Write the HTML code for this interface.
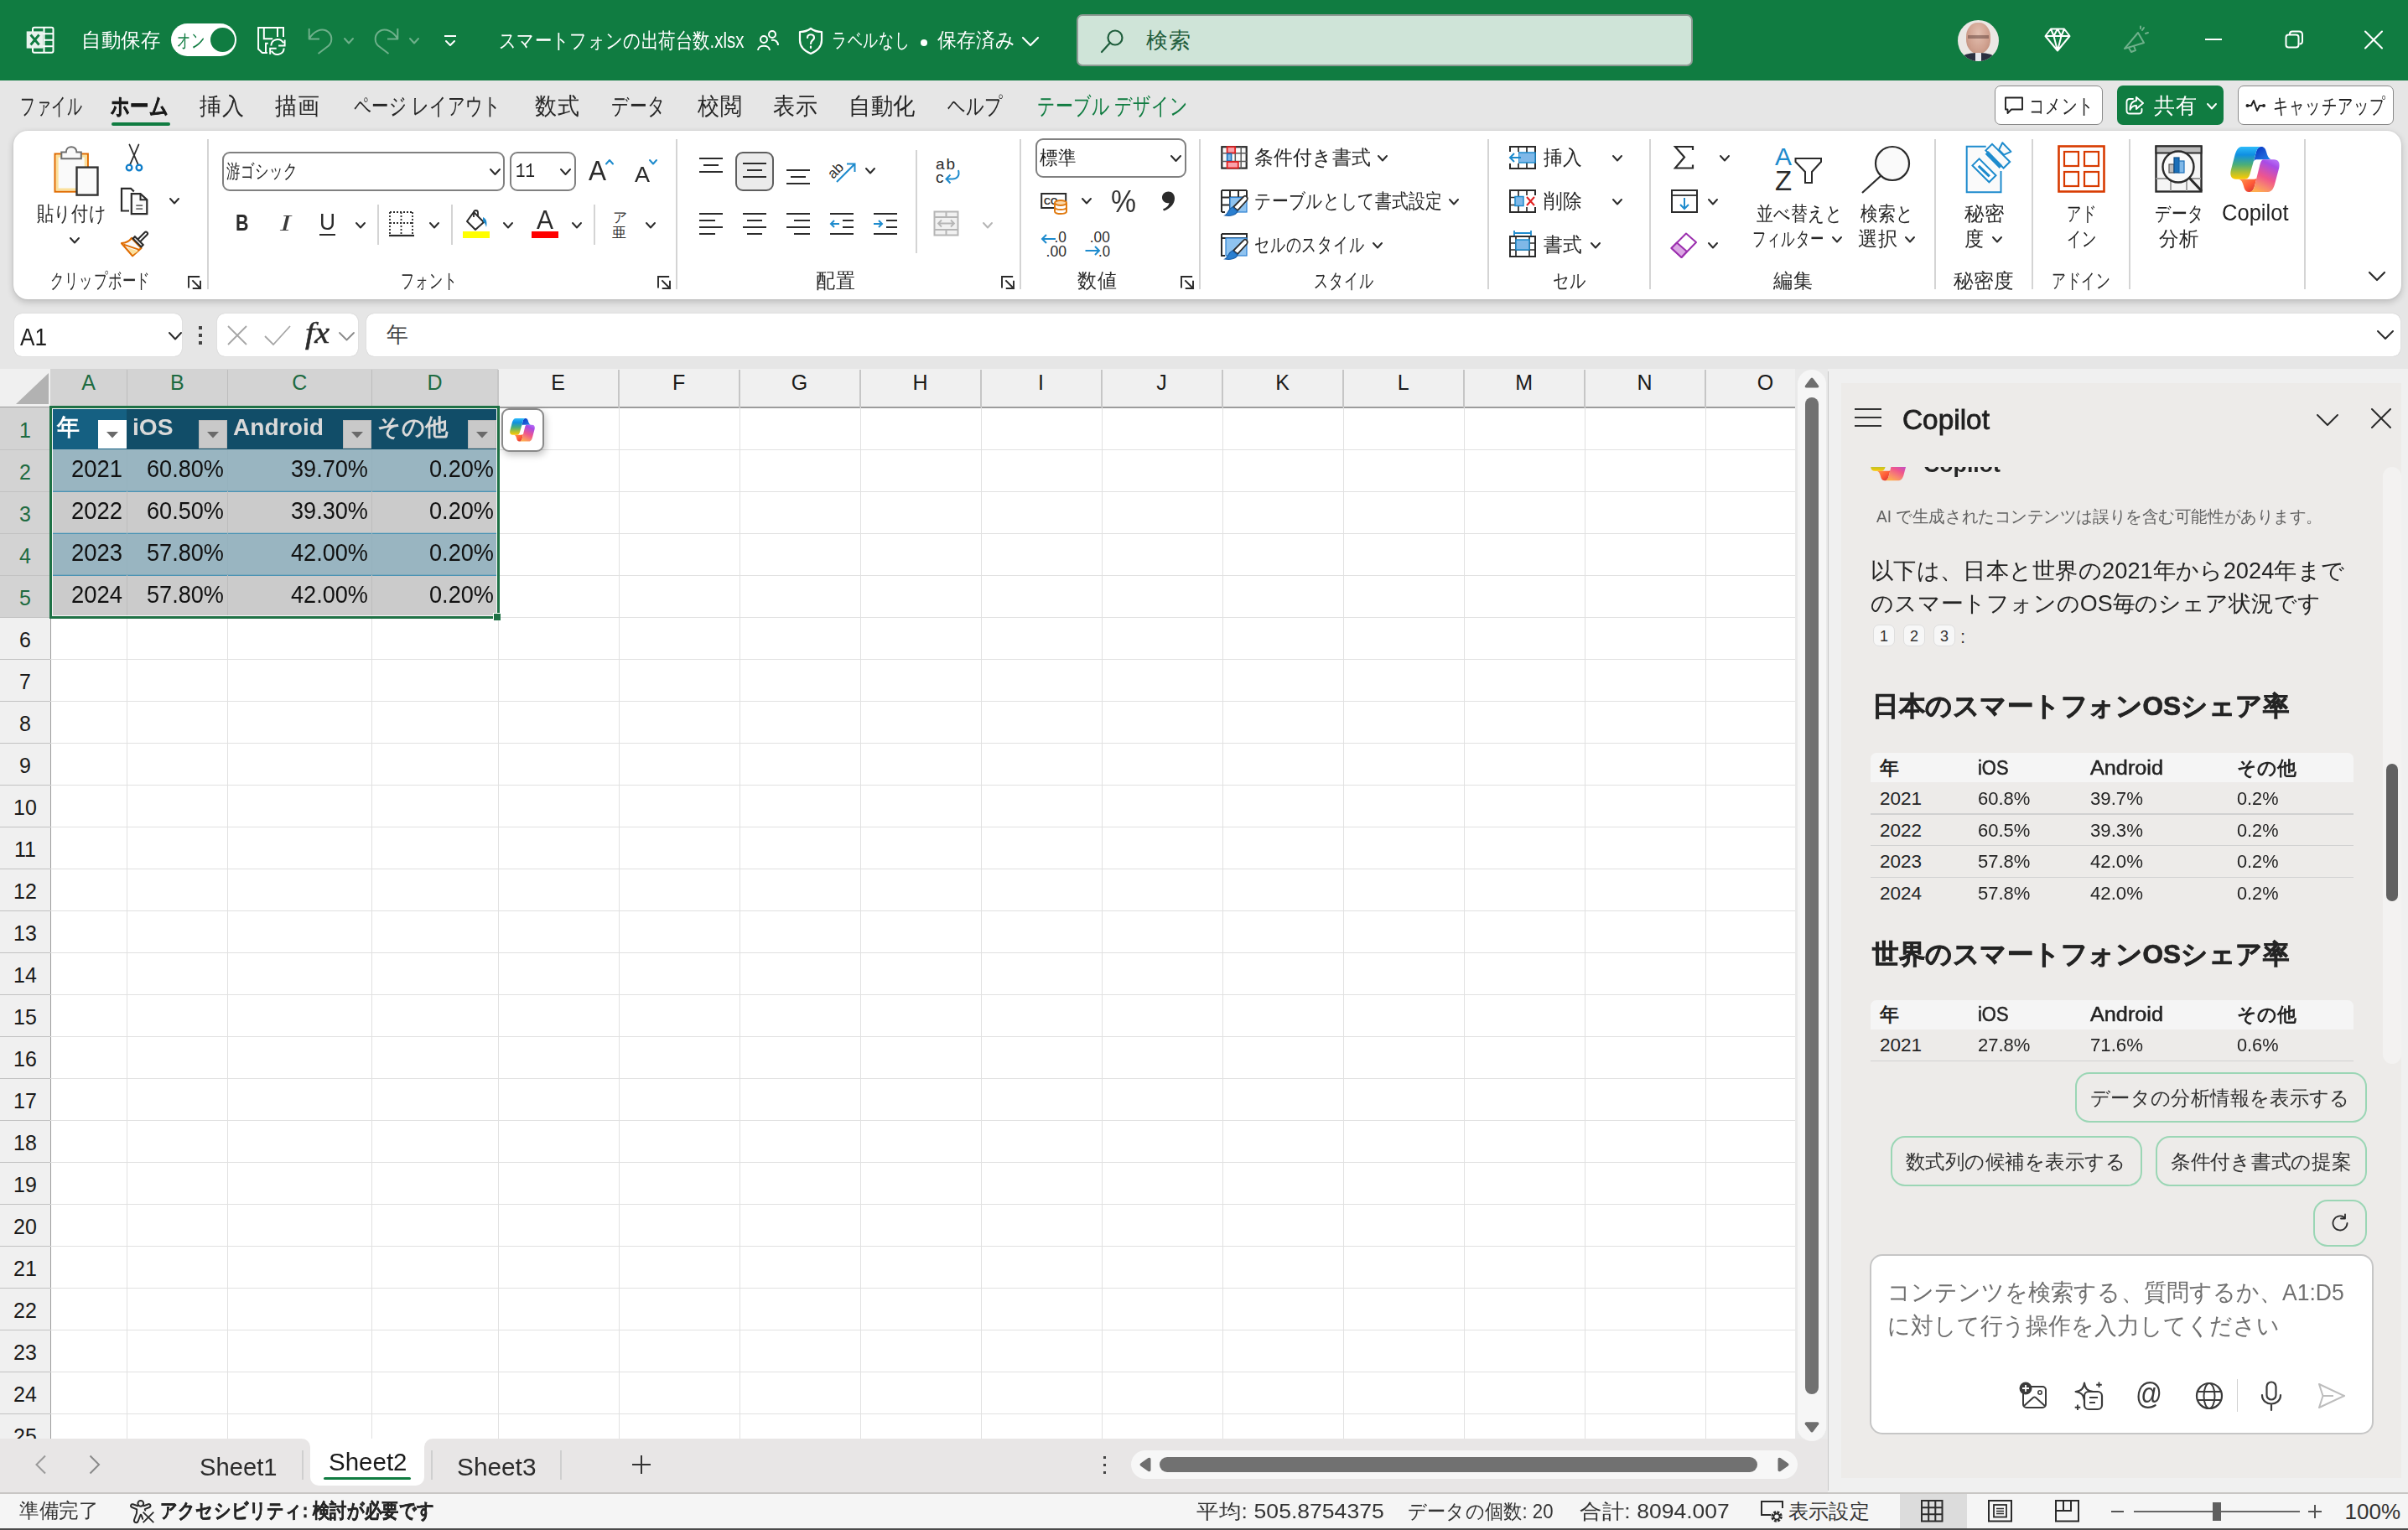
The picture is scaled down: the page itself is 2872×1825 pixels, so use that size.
<!DOCTYPE html>
<html lang="ja"><head><meta charset="utf-8"><title>Excel</title><style>
html,body{margin:0;padding:0}
body{width:2872px;height:1825px;overflow:hidden;position:relative;background:#e6e6e6;font-family:"Liberation Sans",sans-serif;}
div,svg,span.t{position:absolute;box-sizing:border-box}
span.t{white-space:nowrap;transform-origin:0 50%;display:block}
svg{overflow:visible}
</style></head>
<body>
<div style="left:0px;top:0px;width:2872px;height:96px;background:#107c41;"></div>
<svg style="left:31px;top:31px;" width="34" height="34" viewBox="0 0 34 34">
<rect x="8" y="1.8" width="24.5" height="30" rx="2" fill="none" stroke="#fff" stroke-width="2"/>
<path d="M21.5 2 V31.5 M21.5 9.3 H32 M21.5 16.8 H32 M21.5 24.3 H32 M8 9.3 H21.5 M8 24.3 H21.5" stroke="#fff" stroke-width="2" fill="none"/>
<rect x="0.7" y="6.4" width="19.8" height="20.2" fill="#e9f3ed"/>
<path d="M5.6 10.5 L15.6 22.5 M15.6 10.5 L5.6 22.5" stroke="#107c41" stroke-width="2.8" fill="none"/></svg>
<span class="t" style="left:97px;top:36.0px;font-size:24px;line-height:24px;color:#fff;width:96.6px;text-align-last:justify;transform:scaleX(0.979);">自動保存</span>
<div style="left:204px;top:28px;width:78px;height:39px;background:#fff;border-radius:20px;"></div>
<div style="left:251px;top:33px;width:29px;height:29px;background:#107c41;border-radius:50%;"></div>
<span class="t" style="left:210.5px;top:36.5px;font-size:23px;line-height:23px;color:#107c41;width:48.6px;text-align-last:justify;transform:scaleX(0.708);">オン</span>
<svg style="left:296px;top:24px;" width="60" height="48" viewBox="0 0 60 48"><path d="M42 19.9 V9.1 H12.1 V34.5 L16.9 39.1 H22.9 M18.8 9.1 V22.3 H29.2 M35 9.1 V19.9 M21 39.1 V27.8 H23.8" fill="none" stroke="#fff" stroke-width="2"/>
<path d="M27.3 30.5 A7.8 7.8 0 0 1 42 27.3 M43.6 23.4 V30.6 H36.1" fill="none" stroke="#fff" stroke-width="2"/>
<path d="M42.7 33.5 A7.8 7.8 0 0 1 28 36.7 M26.2 40.8 V33.7 H33.7" fill="none" stroke="#fff" stroke-width="2"/></svg>
<svg style="left:366px;top:31px;" width="32" height="35" viewBox="0 0 32 35"><path d="M2.7 3 V15.4 H15 M2.7 15.4 C8 6 17 2.5 23 5.5 C30 9 31.5 18 26 23.5 L13.5 33" fill="none" stroke="#6fb08b" stroke-width="2" stroke-linejoin="round"/></svg>
<svg style="left:409.0px;top:43.75px;" width="14" height="9.5" viewBox="0 0 14 9.5"><polyline points="2,2 7.0,7.5 12,2" fill="none" stroke="#6fb08b" stroke-width="2" stroke-linecap="round" stroke-linejoin="round"/></svg>
<svg style="left:445px;top:31px;" width="32" height="35" viewBox="0 0 32 35"><path d="M29.3 3 V15.4 H17 M29.3 15.4 C24 6 15 2.5 9 5.5 C2 9 0.5 18 6 23.5 L18.5 33" fill="none" stroke="#6fb08b" stroke-width="2" stroke-linejoin="round"/></svg>
<svg style="left:487.0px;top:43.75px;" width="14" height="9.5" viewBox="0 0 14 9.5"><polyline points="2,2 7.0,7.5 12,2" fill="none" stroke="#6fb08b" stroke-width="2" stroke-linecap="round" stroke-linejoin="round"/></svg>
<svg style="left:528px;top:41px;" width="18" height="4" viewBox="0 0 18 4"><line x1="2" y1="2" x2="16" y2="2" stroke="#fff" stroke-width="2" stroke-linecap="butt"/></svg>
<svg style="left:530.0px;top:46.5px;" width="14" height="9" viewBox="0 0 14 9"><polyline points="2,2 7.0,7 12,2" fill="none" stroke="#fff" stroke-width="2" stroke-linecap="round" stroke-linejoin="round"/></svg>
<span class="t" style="left:595px;top:35.5px;font-size:25px;line-height:25px;color:#fff;width:357.6px;text-align-last:justify;transform:scaleX(0.818);">スマートフォンの出荷台数.xlsx</span>
<svg style="left:903px;top:35px;" width="26" height="26" viewBox="0 0 26 26"><circle cx="8" cy="12" r="4" fill="none" stroke="#fff" stroke-width="2"/><path d="M1 25 C1 18 15 18 15 25" fill="none" stroke="#fff" stroke-width="2"/><circle cx="18" cy="6" r="4" fill="none" stroke="#fff" stroke-width="2"/><path d="M17 13 C22 12 25 15 25 19" fill="none" stroke="#fff" stroke-width="2"/></svg>
<svg style="left:952px;top:32px;" width="30" height="34" viewBox="0 0 30 34"><path d="M15 2 C11 5 7 6 2 6 V16 C2 24 8 29 15 32 C22 29 28 24 28 16 V6 C23 6 19 5 15 2 Z" fill="none" stroke="#fff" stroke-width="2.2" stroke-linejoin="round"/><path d="M11 13 C11 8 19 8 19 13 C19 16 15 16 15 20 M15 23.5 V25" fill="none" stroke="#fff" stroke-width="2.2" stroke-linecap="round"/></svg>
<span class="t" style="left:992px;top:36.0px;font-size:24px;line-height:24px;color:#fff;width:125.6px;text-align-last:justify;transform:scaleX(0.744);">ラベルなし</span>
<div style="left:1097.5px;top:46.5px;width:8px;height:8px;background:#fff;border-radius:50%;"></div>
<span class="t" style="left:1117.5px;top:36.0px;font-size:24px;line-height:24px;color:#fff;width:97.6px;text-align-last:justify;transform:scaleX(0.948);">保存済み</span>
<svg style="left:1218.0px;top:42.5px;" width="22" height="13" viewBox="0 0 22 13"><polyline points="2,2 11.0,11 20,2" fill="none" stroke="#fff" stroke-width="2.2" stroke-linecap="round" stroke-linejoin="round"/></svg>
<div style="left:1284px;top:17px;width:735px;height:62px;background:#cfe4d8;border:2px solid #8f9a94;border-radius:7px;"></div>
<svg style="left:1312px;top:34px;" width="30" height="30" viewBox="0 0 30 30"><circle cx="18" cy="11" r="8.5" fill="none" stroke="#1f5d3c" stroke-width="2.2"/><line x1="12" y1="17" x2="2" y2="28" stroke="#1f5d3c" stroke-width="2.2" stroke-linecap="round"/></svg>
<span class="t" style="left:1367px;top:35.0px;font-size:26px;line-height:26px;color:#1f5d3c;width:52.6px;text-align-last:justify;">検索</span>
<div style="left:2335px;top:24px;width:49px;height:49px;background:#ebe7e4;border-radius:50%;overflow:hidden;"><div style="left:10px;top:3px;width:29px;height:37px;border-radius:46%;background:radial-gradient(ellipse at 50% 35%,#e3bfb0 0%,#cfa08e 60%,#b98673 100%);filter:blur(.6px)"></div><div style="left:12px;top:17.5px;width:25px;height:4px;background:#6b4a42;opacity:.55;filter:blur(.5px)"></div><div style="left:5px;top:39px;width:39px;height:14px;background:#2b3040;border-radius:45% 45% 0 0;filter:blur(.5px)"></div><div style="left:21px;top:39px;width:7px;height:10px;background:#e8e8ee;filter:blur(.5px)"></div></div>
<svg style="left:2438px;top:33px;" width="32" height="29" viewBox="0 0 32 29"><path d="M8 1.5 H24 L30.5 10 L16 27.5 L1.5 10 Z M1.5 10 H30.5 M8 1.5 L11.5 10 L16 27.5 L20.5 10 L24 1.5 M11.5 10 L16 1.5 L20.5 10" fill="none" stroke="#fff" stroke-width="2" stroke-linejoin="round"/></svg>
<svg style="left:2530px;top:31px;" width="34" height="34" viewBox="0 0 34 34"><path d="M4 27 L20 8 L27 20 Z M9 26 L12 31 L17 29 L15 24 M25 5 L27 2 M29 9 L32 8 M23 3 L23 0.5" fill="none" stroke="#6fb08b" stroke-width="2" stroke-linejoin="round" stroke-linecap="round"/></svg>
<svg style="left:2628px;top:45px;" width="24" height="4" viewBox="0 0 24 4"><line x1="2" y1="2" x2="22" y2="2" stroke="#fff" stroke-width="2" stroke-linecap="butt"/></svg>
<svg style="left:2725px;top:36px;" width="24" height="24" viewBox="0 0 24 24"><rect x="1.5" y="5.5" width="15" height="15" rx="3" fill="none" stroke="#fff" stroke-width="2"/><path d="M6 5 V4.5 Q6 1.5 9 1.5 H17 Q21 1.5 21 5.5 V13 Q21 16.5 17.5 16.5" fill="none" stroke="#fff" stroke-width="2"/></svg>
<svg style="left:2820px;top:36px;" width="24" height="24" viewBox="0 0 24 24"><path d="M1 1.5 L21 21.5 M21 1.5 L1 21.5" stroke="#fff" stroke-width="2.1" stroke-linecap="round"/></svg>
<span class="t" style="left:24px;top:113.0px;font-size:28px;line-height:28px;color:#262626;width:116.6px;text-align-last:justify;transform:scaleX(0.638);">ファイル</span>
<span class="t" style="left:238px;top:113.0px;font-size:28px;line-height:28px;color:#262626;width:56.6px;text-align-last:justify;transform:scaleX(0.929);">挿入</span>
<span class="t" style="left:328px;top:113.0px;font-size:28px;line-height:28px;color:#262626;width:56.6px;text-align-last:justify;transform:scaleX(0.929);">描画</span>
<span class="t" style="left:422px;top:113.0px;font-size:28px;line-height:28px;color:#262626;width:239.4px;text-align-last:justify;transform:scaleX(0.733);">ページ レイアウト</span>
<span class="t" style="left:638px;top:113.0px;font-size:28px;line-height:28px;color:#262626;width:56.6px;text-align-last:justify;transform:scaleX(0.929);">数式</span>
<span class="t" style="left:729px;top:113.0px;font-size:28px;line-height:28px;color:#262626;width:86.6px;text-align-last:justify;transform:scaleX(0.744);">データ</span>
<span class="t" style="left:832px;top:113.0px;font-size:28px;line-height:28px;color:#262626;width:56.6px;text-align-last:justify;transform:scaleX(0.929);">校閲</span>
<span class="t" style="left:922px;top:113.0px;font-size:28px;line-height:28px;color:#262626;width:56.6px;text-align-last:justify;transform:scaleX(0.929);">表示</span>
<span class="t" style="left:1012px;top:113.0px;font-size:28px;line-height:28px;color:#262626;width:84.6px;text-align-last:justify;transform:scaleX(0.940);">自動化</span>
<span class="t" style="left:1130px;top:113.0px;font-size:28px;line-height:28px;color:#262626;width:87.6px;text-align-last:justify;transform:scaleX(0.759);">ヘルプ</span>
<span class="t" style="left:132px;top:113.0px;font-size:28px;line-height:28px;color:#1a1a1a;font-weight:bold;width:86.6px;text-align-last:justify;transform:scaleX(0.802);-webkit-text-stroke:.5px #1a1a1a;">ホーム</span>
<div style="left:133px;top:145.5px;width:70px;height:4px;background:#107c41;border-radius:2px;"></div>
<span class="t" style="left:1237px;top:113.0px;font-size:28px;line-height:28px;color:#107c41;width:239.4px;text-align-last:justify;transform:scaleX(0.750);">テーブル デザイン</span>
<div style="left:2379px;top:102px;width:129px;height:47px;background:#fff;border:1.5px solid #8a8a8a;border-radius:7px;"></div>
<svg style="left:2390px;top:114px;" width="24" height="24" viewBox="0 0 24 24"><path d="M2 2.5 H22 V16.5 H9 L4.5 21 V16.5 H2 Z" fill="none" stroke="#222" stroke-width="1.9" stroke-linejoin="round"/></svg>
<span class="t" style="left:2420px;top:113.5px;font-size:25px;line-height:25px;color:#222;width:104.6px;text-align-last:justify;transform:scaleX(0.740);">コメント</span>
<div style="left:2525px;top:102px;width:127px;height:47px;background:#107c41;border-radius:7px;"></div>
<svg style="left:2534px;top:113px;" width="26" height="26" viewBox="0 0 26 26"><path d="M10 5 H6 Q2.5 5 2.5 8.5 V19 Q2.5 22.5 6 22.5 H17 Q20.5 22.5 20.5 19 V17 M14 3 L22 10 L14 17 V13 C10 13 8 14.5 6.5 18 C6.5 12 9 7.5 14 7 Z" fill="none" stroke="#fff" stroke-width="1.9" stroke-linejoin="round" stroke-linecap="round"/></svg>
<span class="t" style="left:2569px;top:113.0px;font-size:26px;line-height:26px;color:#fff;width:52.6px;text-align-last:justify;transform:scaleX(0.962);">共有</span>
<svg style="left:2631.0px;top:122.25px;" width="14" height="9.5" viewBox="0 0 14 9.5"><polyline points="2,2 7.0,7.5 12,2" fill="none" stroke="#fff" stroke-width="2" stroke-linecap="round" stroke-linejoin="round"/></svg>
<div style="left:2669px;top:102px;width:186px;height:47px;background:#fff;border:1.5px solid #8a8a8a;border-radius:7px;"></div>
<svg style="left:2678px;top:116px;" width="26" height="20" viewBox="0 0 26 20"><path d="M3 10 H7 L10 4 L14 16 L17 10 H20" fill="none" stroke="#222" stroke-width="2" stroke-linejoin="round" stroke-linecap="round"/><circle cx="2.5" cy="10" r="2" fill="#222"/><circle cx="22" cy="10" r="2" fill="#222"/></svg>
<span class="t" style="left:2711px;top:113.5px;font-size:25px;line-height:25px;color:#222;width:182.6px;text-align-last:justify;transform:scaleX(0.736);">キャッチアップ</span>
<div style="left:16px;top:155.5px;width:2848px;height:201.5px;background:#fff;border-radius:17px;box-shadow:0 3px 8px rgba(0,0,0,.2),0 0 2px rgba(0,0,0,.1);"></div>
<div style="left:246.5px;top:166px;width:2px;height:179px;background:#d4d4d4;"></div>
<div style="left:806px;top:166px;width:2px;height:179px;background:#d4d4d4;"></div>
<div style="left:1216px;top:166px;width:2px;height:179px;background:#d4d4d4;"></div>
<div style="left:1430px;top:166px;width:2px;height:179px;background:#d4d4d4;"></div>
<div style="left:1774px;top:166px;width:2px;height:179px;background:#d4d4d4;"></div>
<div style="left:1967px;top:166px;width:2px;height:179px;background:#d4d4d4;"></div>
<div style="left:2307px;top:166px;width:2px;height:179px;background:#d4d4d4;"></div>
<div style="left:2423px;top:166px;width:2px;height:179px;background:#d4d4d4;"></div>
<div style="left:2538.5px;top:166px;width:2px;height:179px;background:#d4d4d4;"></div>
<div style="left:2747.5px;top:166px;width:2px;height:179px;background:#d4d4d4;"></div>
<span class="t" style="left:60px;top:324.2px;font-size:23.5px;line-height:23.5px;color:#2b2b2b;width:174.6px;text-align-last:justify;transform:scaleX(0.684);">クリップボード</span>
<span class="t" style="left:478px;top:324.2px;font-size:23.5px;line-height:23.5px;color:#2b2b2b;width:100.6px;text-align-last:justify;transform:scaleX(0.670);">フォント</span>
<span class="t" style="left:973px;top:324.2px;font-size:23.5px;line-height:23.5px;color:#2b2b2b;width:48.6px;text-align-last:justify;transform:scaleX(0.958);">配置</span>
<span class="t" style="left:1285px;top:324.2px;font-size:23.5px;line-height:23.5px;color:#2b2b2b;width:48.6px;text-align-last:justify;transform:scaleX(0.958);">数値</span>
<span class="t" style="left:1567px;top:324.2px;font-size:23.5px;line-height:23.5px;color:#2b2b2b;width:100.6px;text-align-last:justify;transform:scaleX(0.710);">スタイル</span>
<span class="t" style="left:1852px;top:324.2px;font-size:23.5px;line-height:23.5px;color:#2b2b2b;width:50.6px;text-align-last:justify;transform:scaleX(0.800);">セル</span>
<span class="t" style="left:2115px;top:324.2px;font-size:23.5px;line-height:23.5px;color:#2b2b2b;width:48.6px;text-align-last:justify;transform:scaleX(0.958);">編集</span>
<span class="t" style="left:2330px;top:324.2px;font-size:23.5px;line-height:23.5px;color:#2b2b2b;width:72.6px;text-align-last:justify;transform:scaleX(0.986);">秘密度</span>
<span class="t" style="left:2447px;top:324.2px;font-size:23.5px;line-height:23.5px;color:#2b2b2b;width:100.6px;text-align-last:justify;transform:scaleX(0.700);">アドイン</span>
<svg style="left:224px;top:329px;" width="17" height="17" viewBox="0 0 17 17"><path d="M1 13.5 V1 H13.2 M6 6 L15 15 M15 6.7 V15 H6.7" fill="none" stroke="#2b2b2b" stroke-width="1.9" stroke-linecap="square"/></svg>
<svg style="left:784px;top:329px;" width="17" height="17" viewBox="0 0 17 17"><path d="M1 13.5 V1 H13.2 M6 6 L15 15 M15 6.7 V15 H6.7" fill="none" stroke="#2b2b2b" stroke-width="1.9" stroke-linecap="square"/></svg>
<svg style="left:1194px;top:329px;" width="17" height="17" viewBox="0 0 17 17"><path d="M1 13.5 V1 H13.2 M6 6 L15 15 M15 6.7 V15 H6.7" fill="none" stroke="#2b2b2b" stroke-width="1.9" stroke-linecap="square"/></svg>
<svg style="left:1408px;top:329px;" width="17" height="17" viewBox="0 0 17 17"><path d="M1 13.5 V1 H13.2 M6 6 L15 15 M15 6.7 V15 H6.7" fill="none" stroke="#2b2b2b" stroke-width="1.9" stroke-linecap="square"/></svg>
<svg style="left:2824.0px;top:323.0px;" width="22" height="13" viewBox="0 0 22 13"><polyline points="2,2 11.0,11 20,2" fill="none" stroke="#2b2b2b" stroke-width="2.2" stroke-linecap="round" stroke-linejoin="round"/></svg>
<svg style="left:64px;top:173px;" width="56" height="62" viewBox="0 0 56 62"><rect x="1.6" y="10.6" width="39.2" height="45" fill="#fafafa" stroke="#e06c00" stroke-width="2.2"/>
<rect x="4.2" y="13.2" width="34" height="39.8" fill="none" stroke="#fbe09c" stroke-width="3"/>
<path d="M9.3 16.3 V8.4 H14.8 C14.8 0.2 27.4 0.2 27.4 8.4 H32.8 V16.3 Z" fill="#fafafa" stroke="#6e6e6e" stroke-width="2"/>
<rect x="27.5" y="26.6" width="25" height="33" fill="#fafafa" stroke="#333" stroke-width="2.4"/></svg>
<span class="t" style="left:44px;top:242.5px;font-size:24px;line-height:24px;color:#262626;width:98.6px;text-align-last:justify;transform:scaleX(0.837);">貼り付け</span>
<svg style="left:82.0px;top:281.75px;" width="14" height="9.5" viewBox="0 0 14 9.5"><polyline points="2,2 7.0,7.5 12,2" fill="none" stroke="#2b2b2b" stroke-width="2" stroke-linecap="round" stroke-linejoin="round"/></svg>
<svg style="left:148px;top:171px;" width="24" height="34" viewBox="0 0 24 34"><path d="M6.4 1.5 L16.9 25.6 M17.4 1.5 L7 25.6" stroke="#2b2b2b" stroke-width="1.8" fill="none" stroke-linecap="round"/><circle cx="6.1" cy="29" r="3.3" fill="none" stroke="#0f7dc9" stroke-width="2.3"/><circle cx="17.9" cy="29" r="3.3" fill="none" stroke="#0f7dc9" stroke-width="2.3"/></svg>
<svg style="left:143px;top:223px;" width="35" height="34" viewBox="0 0 35 34"><path d="M11 28.5 H2 V1.8 H13 L16.8 5.4" fill="none" stroke="#2b2b2b" stroke-width="2.2"/><path d="M13.8 8.1 H24.5 L32.3 15.2 V32.1 H13.8 Z" fill="#fafafa" stroke="#2b2b2b" stroke-width="2.2" stroke-linejoin="miter"/><path d="M24.5 8.1 V15.2 H32.3" fill="none" stroke="#2b2b2b" stroke-width="2"/><path d="M19.3 22.2 H27.1 M19.3 26.1 H27.1" stroke="#6a6a6a" stroke-width="1.8"/></svg>
<svg style="left:201.0px;top:235.25px;" width="14" height="9.5" viewBox="0 0 14 9.5"><polyline points="2,2 7.0,7.5 12,2" fill="none" stroke="#2b2b2b" stroke-width="2" stroke-linecap="round" stroke-linejoin="round"/></svg>
<svg style="left:143px;top:275px;" width="36" height="34" viewBox="0 0 36 34"><path d="M2 15.2 C7 14.8 11.5 12.5 14 8.9 L25.5 20.9 L15.1 30.3 Z" fill="#fafafa" stroke="#e06c00" stroke-width="2.2" stroke-linejoin="round"/><path d="M9.3 20.4 L22 24.4 L15.1 29 Z" fill="#fbe09c"/><path d="M4.5 16.6 L23 22.9" stroke="#e06c00" stroke-width="2" fill="none"/><line x1="31" y1="3.6" x2="23.5" y2="11.1" stroke="#2b2b2b" stroke-width="6" stroke-linecap="round"/><line x1="31" y1="3.6" x2="23" y2="11.6" stroke="#fff" stroke-width="2" stroke-linecap="round"/><line x1="16" y1="7.7" x2="27.3" y2="19" stroke="#2b2b2b" stroke-width="5.4"/><line x1="17.5" y1="9.2" x2="25.8" y2="17.5" stroke="#f4f4f4" stroke-width="1.3"/></svg>
<div style="left:264.5px;top:180.5px;width:337.5px;height:47px;background:#fff;border:2px solid #808080;border-radius:9px;"></div>
<span class="t" style="left:270px;top:192.5px;font-size:23px;line-height:23px;color:#1f1f1f;width:119.6px;text-align-last:justify;transform:scaleX(0.714);">游ゴシック</span>
<svg style="left:582.5px;top:200.0px;" width="15" height="10" viewBox="0 0 15 10"><polyline points="2,2 7.5,8 13,2" fill="none" stroke="#2b2b2b" stroke-width="2" stroke-linecap="round" stroke-linejoin="round"/></svg>
<div style="left:607.5px;top:180.5px;width:79.5px;height:47px;background:#fff;border:2px solid #808080;border-radius:9px;"></div>
<span class="t" style="left:615px;top:193.0px;font-size:24px;line-height:24px;color:#1f1f1f;width:29.4px;text-align-last:justify;transform:scaleX(0.798);font-family:'Liberation Mono',monospace;">11</span>
<svg style="left:666.5px;top:200.0px;" width="15" height="10" viewBox="0 0 15 10"><polyline points="2,2 7.5,8 13,2" fill="none" stroke="#2b2b2b" stroke-width="2" stroke-linecap="round" stroke-linejoin="round"/></svg>
<span class="t" style="left:702px;top:186.0px;font-size:34px;line-height:34px;color:#2b2b2b;width:23.3px;text-align-last:justify;transform:scaleX(0.926);">A</span>
<svg style="left:721.0px;top:188.75px;" width="12" height="8.5" viewBox="0 0 12 8.5"><polyline points="2,6.5 6.0,2 10,6.5" fill="none" stroke="#1e8bcd" stroke-width="2" stroke-linecap="round" stroke-linejoin="round"/></svg>
<span class="t" style="left:757px;top:195.0px;font-size:26px;line-height:26px;color:#2b2b2b;width:17.9px;text-align-last:justify;transform:scaleX(1.038);">A</span>
<svg style="left:773.0px;top:189.25px;" width="12" height="8.5" viewBox="0 0 12 8.5"><polyline points="2,2 6.0,6.5 10,2" fill="none" stroke="#1e8bcd" stroke-width="2" stroke-linecap="round" stroke-linejoin="round"/></svg>
<span class="t" style="left:281px;top:252.0px;font-size:28px;line-height:28px;color:#2b2b2b;font-weight:bold;width:20.8px;text-align-last:justify;transform:scaleX(0.766);">B</span>
<span class="t" style="left:334px;top:252.5px;font-size:27px;line-height:27px;color:#3a3a3a;width:9.6px;text-align-last:justify;transform:scaleX(1.444);font-family:'Liberation Serif',serif;font-style:italic;">I</span>
<span class="t" style="left:381px;top:251.5px;font-size:27px;line-height:27px;color:#2b2b2b;width:20.1px;text-align-last:justify;transform:scaleX(0.974);">U</span>
<div style="left:381px;top:279px;width:19px;height:2px;background:#2b2b2b;"></div>
<svg style="left:423.0px;top:264.25px;" width="14" height="9.5" viewBox="0 0 14 9.5"><polyline points="2,2 7.0,7.5 12,2" fill="none" stroke="#2b2b2b" stroke-width="2" stroke-linecap="round" stroke-linejoin="round"/></svg>
<div style="left:450px;top:244px;width:2px;height:48px;background:#d4d4d4;"></div>
<svg style="left:463px;top:251px;" width="32" height="32" viewBox="0 0 32 32"><path d="M2 2 H29 M2 2 V28 M29 2 V28 M15.5 2 V28 M2 15 H29" stroke="#2b2b2b" stroke-width="1.8" stroke-dasharray="2 2" fill="none"/><line x1="1" y1="30" x2="31" y2="30" stroke="#2b2b2b" stroke-width="2.2"/></svg>
<svg style="left:510.5px;top:264.25px;" width="14" height="9.5" viewBox="0 0 14 9.5"><polyline points="2,2 7.0,7.5 12,2" fill="none" stroke="#2b2b2b" stroke-width="2" stroke-linecap="round" stroke-linejoin="round"/></svg>
<div style="left:538px;top:244px;width:2px;height:48px;background:#d4d4d4;"></div>
<svg style="left:552px;top:250px;" width="34" height="26" viewBox="0 0 34 26"><path d="M13 3 L25 15 L15 24 L5 14 Z" fill="#fff" stroke="#2b2b2b" stroke-width="2" stroke-linejoin="round"/><path d="M13 9 V3.5 Q13 1 15.5 1 Q18 1 18 3.5 V8" fill="none" stroke="#2b2b2b" stroke-width="1.8"/><path d="M24 9 C29 11 29 17 28 21 C27 17 25 14.5 24 14 Z" fill="#1e8bcd"/></svg>
<div style="left:552px;top:276px;width:32px;height:7.5px;background:#ffff00;"></div>
<svg style="left:599.0px;top:264.25px;" width="14" height="9.5" viewBox="0 0 14 9.5"><polyline points="2,2 7.0,7.5 12,2" fill="none" stroke="#2b2b2b" stroke-width="2" stroke-linecap="round" stroke-linejoin="round"/></svg>
<span class="t" style="left:640px;top:246.5px;font-size:31px;line-height:31px;color:#2b2b2b;width:21.3px;text-align-last:justify;transform:scaleX(0.967);">A</span>
<div style="left:634px;top:276px;width:32px;height:7.5px;background:#ff0000;"></div>
<svg style="left:681.0px;top:264.25px;" width="14" height="9.5" viewBox="0 0 14 9.5"><polyline points="2,2 7.0,7.5 12,2" fill="none" stroke="#2b2b2b" stroke-width="2" stroke-linecap="round" stroke-linejoin="round"/></svg>
<div style="left:708px;top:244px;width:2px;height:48px;background:#d4d4d4;"></div>
<span class="t" style="left:730.5px;top:250.8px;font-size:16.5px;line-height:16.5px;color:#333;">ア</span>
<span class="t" style="left:730px;top:269.2px;font-size:16.5px;line-height:16.5px;color:#333;">亜</span>
<svg style="left:769.0px;top:264.25px;" width="14" height="9.5" viewBox="0 0 14 9.5"><polyline points="2,2 7.0,7.5 12,2" fill="none" stroke="#2b2b2b" stroke-width="2" stroke-linecap="round" stroke-linejoin="round"/></svg>
<svg style="left:834px;top:186px;" width="30" height="30" viewBox="0 0 30 30"><line x1="0" y1="3" x2="28" y2="3" stroke="#2b2b2b" stroke-width="2"/><line x1="5" y1="11" x2="23" y2="11" stroke="#2b2b2b" stroke-width="2"/><line x1="0" y1="19" x2="28" y2="19" stroke="#2b2b2b" stroke-width="2"/></svg>
<div style="left:876.5px;top:180.5px;width:46.5px;height:47px;background:#ebebeb;border:2px solid #5e5e5e;border-radius:9px;"></div>
<svg style="left:886px;top:189px;" width="30" height="30" viewBox="0 0 30 30"><line x1="0" y1="6" x2="28" y2="6" stroke="#2b2b2b" stroke-width="2"/><line x1="5" y1="14" x2="23" y2="14" stroke="#2b2b2b" stroke-width="2"/><line x1="0" y1="22" x2="28" y2="22" stroke="#2b2b2b" stroke-width="2"/></svg>
<svg style="left:938px;top:196px;" width="30" height="30" viewBox="0 0 30 30"><line x1="0" y1="7" x2="28" y2="7" stroke="#2b2b2b" stroke-width="2"/><line x1="5" y1="15" x2="23" y2="15" stroke="#2b2b2b" stroke-width="2"/><line x1="0" y1="23" x2="28" y2="23" stroke="#2b2b2b" stroke-width="2"/></svg>
<svg style="left:986px;top:186px;" width="36" height="36" viewBox="0 0 36 36"><text x="2" y="22" font-size="17" font-family="Liberation Sans" fill="#2b2b2b" transform="rotate(-45 12 18)">ab</text><path d="M12 31 L33 10 M24 9.5 H33.5 V19" fill="none" stroke="#1e8bcd" stroke-width="2"/></svg>
<svg style="left:1030.5px;top:199.25px;" width="14" height="9.5" viewBox="0 0 14 9.5"><polyline points="2,2 7.0,7.5 12,2" fill="none" stroke="#2b2b2b" stroke-width="2" stroke-linecap="round" stroke-linejoin="round"/></svg>
<div style="left:1092px;top:179px;width:2px;height:123px;background:#d4d4d4;"></div>
<svg style="left:1116px;top:188px;" width="32" height="34" viewBox="0 0 32 34"><text x="0" y="14" font-size="19" font-family="Liberation Sans" fill="#2b2b2b" textLength="23">ab</text><text x="0" y="30" font-size="19" font-family="Liberation Sans" fill="#2b2b2b">c</text><path d="M27 15 C29 22 25 25.5 20 25.5 H13 M17.5 20.5 L12.5 25.5 L17.5 30.5" fill="none" stroke="#1e8bcd" stroke-width="2"/></svg>
<svg style="left:1113px;top:251px;" width="32" height="32" viewBox="0 0 32 32"><rect x="1.5" y="1.5" width="28" height="28" fill="#f1f1f1" stroke="#b5b5b5" stroke-width="2"/><path d="M1.5 8 H29.5 M1.5 23 H29.5 M15.5 1.5 V8 M15.5 23 V29.5" stroke="#b5b5b5" stroke-width="2"/><path d="M6 15.5 H25 M10 11.5 L6 15.5 L10 19.5 M21 11.5 L25 15.5 L21 19.5" fill="none" stroke="#b5b5b5" stroke-width="1.8"/></svg>
<svg style="left:1171.0px;top:264.25px;" width="14" height="9.5" viewBox="0 0 14 9.5"><polyline points="2,2 7.0,7.5 12,2" fill="none" stroke="#b5b5b5" stroke-width="2" stroke-linecap="round" stroke-linejoin="round"/></svg>
<svg style="left:834px;top:252px;" width="30" height="30" viewBox="0 0 30 30"><line x1="0" y1="3" x2="28" y2="3" stroke="#2b2b2b" stroke-width="2"/><line x1="0" y1="11" x2="19" y2="11" stroke="#2b2b2b" stroke-width="2"/><line x1="0" y1="19" x2="28" y2="19" stroke="#2b2b2b" stroke-width="2"/><line x1="0" y1="27" x2="19" y2="27" stroke="#2b2b2b" stroke-width="2"/></svg>
<svg style="left:886px;top:252px;" width="30" height="30" viewBox="0 0 30 30"><line x1="0" y1="3" x2="28" y2="3" stroke="#2b2b2b" stroke-width="2"/><line x1="5" y1="11" x2="23" y2="11" stroke="#2b2b2b" stroke-width="2"/><line x1="0" y1="19" x2="28" y2="19" stroke="#2b2b2b" stroke-width="2"/><line x1="5" y1="27" x2="23" y2="27" stroke="#2b2b2b" stroke-width="2"/></svg>
<svg style="left:938px;top:252px;" width="30" height="30" viewBox="0 0 30 30"><line x1="0" y1="3" x2="28" y2="3" stroke="#2b2b2b" stroke-width="2"/><line x1="9" y1="11" x2="28" y2="11" stroke="#2b2b2b" stroke-width="2"/><line x1="0" y1="19" x2="28" y2="19" stroke="#2b2b2b" stroke-width="2"/><line x1="9" y1="27" x2="28" y2="27" stroke="#2b2b2b" stroke-width="2"/></svg>
<svg style="left:990px;top:252px;" width="30" height="30" viewBox="0 0 30 30"><path d="M0 3 H28 M15 11 H28 M15 19 H28 M0 27 H28" stroke="#2b2b2b" stroke-width="2"/><path d="M1 15 H11 M5 11 L1 15 L5 19" fill="none" stroke="#1e8bcd" stroke-width="2"/></svg>
<svg style="left:1042px;top:252px;" width="30" height="30" viewBox="0 0 30 30"><path d="M0 3 H28 M15 11 H28 M15 19 H28 M0 27 H28" stroke="#2b2b2b" stroke-width="2"/><path d="M0 15 H10 M6 11 L10 15 L6 19" fill="none" stroke="#1e8bcd" stroke-width="2"/></svg>
<div style="left:1235px;top:164.5px;width:180px;height:47px;background:#fff;border:2px solid #808080;border-radius:9px;"></div>
<span class="t" style="left:1240px;top:176.5px;font-size:23px;line-height:23px;color:#1f1f1f;width:46.6px;text-align-last:justify;transform:scaleX(0.935);">標準</span>
<svg style="left:1395.0px;top:184.0px;" width="15" height="10" viewBox="0 0 15 10"><polyline points="2,2 7.5,8 13,2" fill="none" stroke="#2b2b2b" stroke-width="2" stroke-linecap="round" stroke-linejoin="round"/></svg>
<svg style="left:1241px;top:229px;" width="34" height="28" viewBox="0 0 34 28"><rect x="1.2" y="2" width="29" height="17" fill="#fff" stroke="#2b2b2b" stroke-width="2"/><text x="4" y="15" font-size="11" font-family="Liberation Sans" font-weight="bold" fill="#2b2b2b">CO</text><path d="M17 13 V23 C17 27 31 27 31 23 V13" fill="#fff" stroke="#e07a10" stroke-width="2"/><ellipse cx="24" cy="13" rx="7" ry="3" fill="#fbd7a8" stroke="#e07a10" stroke-width="2"/><path d="M17 18 C17 22 31 22 31 18" fill="none" stroke="#e07a10" stroke-width="2"/></svg>
<svg style="left:1288.5px;top:235.25px;" width="14" height="9.5" viewBox="0 0 14 9.5"><polyline points="2,2 7.0,7.5 12,2" fill="none" stroke="#2b2b2b" stroke-width="2" stroke-linecap="round" stroke-linejoin="round"/></svg>
<span class="t" style="left:1325px;top:221.5px;font-size:37px;line-height:37px;color:#333;width:33.5px;text-align-last:justify;transform:scaleX(0.912);">%</span>
<svg style="left:1385px;top:228px;" width="17" height="24" viewBox="0 0 17 24"><path d="M8.5 0.5 C13 0.5 16 4 16 8.5 C16 15 11 21 3 23.5 L2 21.5 C6.5 19.5 9 17 9.5 14 C5 15 1 12 1 7.5 C1 3.5 4.5 0.5 8.5 0.5 Z" fill="#2b2b2b"/></svg>
<svg style="left:1241px;top:275px;" width="34" height="34" viewBox="0 0 34 34"><path d="M2 10 H18 M7 5 L2 10 L7 15" fill="none" stroke="#1e8bcd" stroke-width="2"/><text x="16.5" y="14" font-size="17.5" font-family="Liberation Sans" fill="#2b2b2b" textLength="14.5" lengthAdjust="spacingAndGlyphs">.0</text><text x="6.5" y="30.5" font-size="17.5" font-family="Liberation Sans" fill="#2b2b2b" textLength="24.5" lengthAdjust="spacingAndGlyphs">.00</text></svg>
<svg style="left:1293px;top:275px;" width="34" height="34" viewBox="0 0 34 34"><text x="6.8" y="14" font-size="17.5" font-family="Liberation Sans" fill="#2b2b2b" textLength="24" lengthAdjust="spacingAndGlyphs">.00</text><path d="M1.5 24 H18 M13 19 L18 24 L13 29" fill="none" stroke="#1e8bcd" stroke-width="2"/><text x="17" y="30.5" font-size="17.5" font-family="Liberation Sans" fill="#2b2b2b" textLength="14" lengthAdjust="spacingAndGlyphs">.0</text></svg>
<svg style="left:1456px;top:174px;" width="33" height="29" viewBox="0 0 33 29"><rect x="1.3" y="1.2" width="29.4" height="25.4" fill="#fafafa" stroke="#2b2b2b" stroke-width="2.2"/><path d="M1 8.7 H31 M1 18.6 H31 M17.3 1 V27 M24.2 1 V27" stroke="#5a5a5a" stroke-width="1.5"/><rect x="7.6" y="1.2" width="9.5" height="7.2" fill="#f9a3ab" stroke="#e02020" stroke-width="1.8"/><rect x="7.6" y="9.4" width="5" height="8.6" fill="#7fb8e8" stroke="#1b6fb8" stroke-width="1.6"/><rect x="7.6" y="19" width="13.2" height="7.4" fill="#f9a3ab" stroke="#e02020" stroke-width="1.8"/></svg>
<span class="t" style="left:1495.5px;top:176.0px;font-size:24px;line-height:24px;color:#262626;width:145.6px;text-align-last:justify;transform:scaleX(0.952);">条件付き書式</span>
<svg style="left:1642.0px;top:183.75px;" width="14" height="9.5" viewBox="0 0 14 9.5"><polyline points="2,2 7.0,7.5 12,2" fill="none" stroke="#2b2b2b" stroke-width="2" stroke-linecap="round" stroke-linejoin="round"/></svg>
<svg style="left:1456px;top:226px;" width="36" height="34" viewBox="0 0 36 34"><path d="M1 1 H31 M1 1 V27 M1 9.5 H31 M11 1 V27 M21 1 V9.5 M31 1 V9.5 M1 18.5 H11 M1 27 H5" stroke="#2b2b2b" stroke-width="2" fill="none"/><rect x="11" y="9.5" width="20" height="17.5" fill="#8fc3f0" stroke="#2a7fd0" stroke-width="1.2"/><path d="M30 8 Q33 10 31 13 L20 25 L15 21 L27 9 Q28.5 7 30 8 Z" fill="#fff" stroke="#2b2b2b" stroke-width="1.8"/><path d="M14 21 L20 26 C18 31 11 32 5 31 C9 29 9 23 14 21 Z" fill="#2a7fd0" stroke="#1b5fa8" stroke-width="1.2"/></svg>
<span class="t" style="left:1495.5px;top:228.0px;font-size:24px;line-height:24px;color:#262626;width:270.6px;text-align-last:justify;transform:scaleX(0.826);">テーブルとして書式設定</span>
<svg style="left:1727.0px;top:235.75px;" width="14" height="9.5" viewBox="0 0 14 9.5"><polyline points="2,2 7.0,7.5 12,2" fill="none" stroke="#2b2b2b" stroke-width="2" stroke-linecap="round" stroke-linejoin="round"/></svg>
<svg style="left:1456px;top:278px;" width="36" height="34" viewBox="0 0 36 34"><path d="M1 1 H31 V9.5 M1 1 V27 H5 M1 6 H31" stroke="#2b2b2b" stroke-width="2" fill="none"/><rect x="6" y="6" width="25" height="21" fill="#8fc3f0" stroke="#2a7fd0" stroke-width="1.2"/><path d="M30 8 Q33 10 31 13 L20 25 L15 21 L27 9 Q28.5 7 30 8 Z" fill="#fff" stroke="#2b2b2b" stroke-width="1.8"/><path d="M14 21 L20 26 C18 31 11 32 5 31 C9 29 9 23 14 21 Z" fill="#2a7fd0" stroke="#1b5fa8" stroke-width="1.2"/></svg>
<span class="t" style="left:1495.5px;top:280.0px;font-size:24px;line-height:24px;color:#262626;width:175.6px;text-align-last:justify;transform:scaleX(0.749);">セルのスタイル</span>
<svg style="left:1636.0px;top:287.75px;" width="14" height="9.5" viewBox="0 0 14 9.5"><polyline points="2,2 7.0,7.5 12,2" fill="none" stroke="#2b2b2b" stroke-width="2" stroke-linecap="round" stroke-linejoin="round"/></svg>
<svg style="left:1800px;top:174px;" width="33" height="29" viewBox="0 0 33 29"><rect x="1" y="1" width="30" height="26" fill="#fff" stroke="#2b2b2b" stroke-width="2"/><path d="M1 9.5 H31 M1 18.5 H31 M11 1 V27 M21 1 V27" stroke="#2b2b2b" stroke-width="1.7"/><rect x="11" y="8" width="20" height="12" fill="#7fb8e8" stroke="#1e8bcd" stroke-width="1.5"/><rect x="0" y="7" width="11" height="14" fill="#fff"/><path d="M1 14 H14 M6 9 L1 14 L6 19" fill="none" stroke="#1e8bcd" stroke-width="2"/></svg>
<span class="t" style="left:1841px;top:176.0px;font-size:24px;line-height:24px;color:#262626;width:48.6px;text-align-last:justify;transform:scaleX(0.948);">挿入</span>
<svg style="left:1922.0px;top:183.75px;" width="14" height="9.5" viewBox="0 0 14 9.5"><polyline points="2,2 7.0,7.5 12,2" fill="none" stroke="#2b2b2b" stroke-width="2" stroke-linecap="round" stroke-linejoin="round"/></svg>
<svg style="left:1800px;top:226px;" width="33" height="29" viewBox="0 0 33 29"><rect x="1" y="1" width="30" height="26" fill="#fff" stroke="#2b2b2b" stroke-width="2"/><path d="M1 9.5 H31 M1 18.5 H31 M11 1 V27 M21 1 V27" stroke="#2b2b2b" stroke-width="1.7"/><rect x="17" y="7" width="15" height="14" fill="#fff"/><rect x="7" y="8.5" width="10" height="11" fill="#7fb8e8" stroke="#1e8bcd" stroke-width="1.5"/><path d="M21 9 L30 19 M30 9 L21 19" stroke="#e02020" stroke-width="2" fill="none"/></svg>
<span class="t" style="left:1841px;top:228.0px;font-size:24px;line-height:24px;color:#262626;width:48.6px;text-align-last:justify;transform:scaleX(0.948);">削除</span>
<svg style="left:1922.0px;top:235.75px;" width="14" height="9.5" viewBox="0 0 14 9.5"><polyline points="2,2 7.0,7.5 12,2" fill="none" stroke="#2b2b2b" stroke-width="2" stroke-linecap="round" stroke-linejoin="round"/></svg>
<svg style="left:1800px;top:274px;" width="33" height="33" viewBox="0 0 33 33"><path d="M6 1 V7 M26 1 V7 M6 4 H26" stroke="#1e8bcd" stroke-width="1.8" fill="none"/><rect x="1" y="8" width="30" height="24" fill="#fff" stroke="#2b2b2b" stroke-width="2"/><path d="M1 16 H31 M1 24 H31 M8 8 V32 M24 8 V32" stroke="#2b2b2b" stroke-width="1.7"/><rect x="8" y="12" width="16" height="12" fill="#7fb8e8" stroke="#1e8bcd" stroke-width="1.5"/></svg>
<span class="t" style="left:1841px;top:280.0px;font-size:24px;line-height:24px;color:#262626;width:48.6px;text-align-last:justify;transform:scaleX(0.948);">書式</span>
<svg style="left:1896.0px;top:287.75px;" width="14" height="9.5" viewBox="0 0 14 9.5"><polyline points="2,2 7.0,7.5 12,2" fill="none" stroke="#2b2b2b" stroke-width="2" stroke-linecap="round" stroke-linejoin="round"/></svg>
<svg style="left:1996px;top:173px;" width="26" height="30" viewBox="0 0 26 30"><path d="M23 6 V2 H2 L13 14.5 L2 27.5 H23 V23.5" fill="none" stroke="#2b2b2b" stroke-width="2.2" stroke-linejoin="miter"/></svg>
<svg style="left:2050.0px;top:183.75px;" width="14" height="9.5" viewBox="0 0 14 9.5"><polyline points="2,2 7.0,7.5 12,2" fill="none" stroke="#2b2b2b" stroke-width="2" stroke-linecap="round" stroke-linejoin="round"/></svg>
<svg style="left:1993px;top:226px;" width="33" height="29" viewBox="0 0 33 29"><rect x="1" y="1" width="30" height="26" fill="#fff" stroke="#2b2b2b" stroke-width="2"/><line x1="1" y1="7" x2="31" y2="7" stroke="#2b2b2b" stroke-width="1.8"/><path d="M16 10 V23 M11 18 L16 23 L21 18" fill="none" stroke="#1e8bcd" stroke-width="2"/></svg>
<svg style="left:2036.0px;top:235.75px;" width="14" height="9.5" viewBox="0 0 14 9.5"><polyline points="2,2 7.0,7.5 12,2" fill="none" stroke="#2b2b2b" stroke-width="2" stroke-linecap="round" stroke-linejoin="round"/></svg>
<svg style="left:1992px;top:277px;" width="34" height="32" viewBox="0 0 34 32"><path d="M1.5 19 L19 1.5 L31 12 L13.5 30 Z" fill="#fff" stroke="#9b2fae" stroke-width="2" stroke-linejoin="round"/><path d="M1.5 19 L8 12.5 L20 23 L13.5 30 Z" fill="#dba6e4" stroke="#9b2fae" stroke-width="2" stroke-linejoin="round"/></svg>
<svg style="left:2036.0px;top:287.75px;" width="14" height="9.5" viewBox="0 0 14 9.5"><polyline points="2,2 7.0,7.5 12,2" fill="none" stroke="#2b2b2b" stroke-width="2" stroke-linecap="round" stroke-linejoin="round"/></svg>
<span class="t" style="left:2117px;top:172.0px;font-size:30px;line-height:30px;color:#1e8bcd;">A</span>
<span class="t" style="left:2117px;top:198.5px;font-size:33px;line-height:33px;color:#2b2b2b;">Z</span>
<svg style="left:2140px;top:187px;" width="34" height="34" viewBox="0 0 34 34"><path d="M1.5 2 H32 V6 L21 18 V31 H13 V18 L1.5 6 Z" fill="#fff" stroke="#2b2b2b" stroke-width="2" stroke-linejoin="miter"/></svg>
<span class="t" style="left:2094.5px;top:242.5px;font-size:24px;line-height:24px;color:#262626;width:123.6px;text-align-last:justify;transform:scaleX(0.829);">並べ替えと</span>
<span class="t" style="left:2089.5px;top:273.0px;font-size:24px;line-height:24px;color:#262626;width:124.6px;text-align-last:justify;transform:scaleX(0.685);">フィルター</span>
<svg style="left:2184.0px;top:280.75px;" width="14" height="9.5" viewBox="0 0 14 9.5"><polyline points="2,2 7.0,7.5 12,2" fill="none" stroke="#2b2b2b" stroke-width="2" stroke-linecap="round" stroke-linejoin="round"/></svg>
<svg style="left:2220px;top:173px;" width="62" height="60" viewBox="0 0 62 60"><circle cx="37" cy="22" r="20" fill="#fafafa" stroke="#2b2b2b" stroke-width="2.2"/><line x1="23" y1="37" x2="1" y2="57" stroke="#2b2b2b" stroke-width="2.2"/></svg>
<span class="t" style="left:2219px;top:242.5px;font-size:24px;line-height:24px;color:#262626;width:73.6px;text-align-last:justify;transform:scaleX(0.863);">検索と</span>
<span class="t" style="left:2215.5px;top:273.0px;font-size:24px;line-height:24px;color:#262626;width:48.6px;text-align-last:justify;transform:scaleX(0.969);">選択</span>
<svg style="left:2271.0px;top:280.75px;" width="14" height="9.5" viewBox="0 0 14 9.5"><polyline points="2,2 7.0,7.5 12,2" fill="none" stroke="#2b2b2b" stroke-width="2" stroke-linecap="round" stroke-linejoin="round"/></svg>
<svg style="left:2330px;top:160px;" width="90" height="80" viewBox="0 0 90 80"><rect x="15.7" y="14.7" width="40.8" height="54.6" fill="#fafafa"/><path d="M38.7 14.7 H15.7 V69.3 H56.5 V44" fill="none" stroke="#1e8bcd" stroke-width="2"/><polygon points="22.5,37.4 30.6,29.3 50.5,49.2 42.4,57.3" fill="#fff" stroke="#1e8bcd" stroke-width="2"/><line x1="29.8" y1="37.8" x2="42.8" y2="50.3" stroke="#1e8bcd" stroke-width="3.2"/><polygon points="38.4,19.4 46,11.8 67.2,33 59.6,40.5" fill="#fafafa" stroke="#1e8bcd" stroke-width="2"/><polygon points="37.7,23.8 41.5,20.2 58,37.2 54.7,41" fill="#1e8bcd"/><polygon points="54.1,18.8 58.3,10.2 68.5,20.9 60.1,24.6" fill="#fafafa" stroke="#1e8bcd" stroke-width="2" stroke-linejoin="round"/></svg>
<span class="t" style="left:2343px;top:242.5px;font-size:24px;line-height:24px;color:#262626;width:48.6px;text-align-last:justify;transform:scaleX(0.979);">秘密</span>
<span class="t" style="left:2343px;top:273.0px;font-size:24px;line-height:24px;color:#262626;width:24.6px;text-align-last:justify;transform:scaleX(0.958);">度</span>
<svg style="left:2374.5px;top:280.75px;" width="14" height="9.5" viewBox="0 0 14 9.5"><polyline points="2,2 7.0,7.5 12,2" fill="none" stroke="#2b2b2b" stroke-width="2" stroke-linecap="round" stroke-linejoin="round"/></svg>
<svg style="left:2454px;top:173px;" width="58" height="58" viewBox="0 0 58 58"><rect x="1.5" y="1.5" width="54" height="54" fill="#fff" stroke="#d83b01" stroke-width="2.6"/><rect x="8" y="8" width="17" height="17" fill="none" stroke="#d83b01" stroke-width="2.2"/><rect x="32" y="8" width="17" height="17" fill="none" stroke="#d83b01" stroke-width="2.2"/><rect x="8" y="32" width="17" height="17" fill="none" stroke="#d83b01" stroke-width="2.2"/><rect x="32" y="32" width="17" height="17" fill="none" stroke="#d83b01" stroke-width="2.2"/></svg>
<span class="t" style="left:2465px;top:242.5px;font-size:24px;line-height:24px;color:#262626;width:50.6px;text-align-last:justify;transform:scaleX(0.720);">アド</span>
<span class="t" style="left:2465px;top:273.0px;font-size:24px;line-height:24px;color:#262626;width:50.6px;text-align-last:justify;transform:scaleX(0.720);">イン</span>
<svg style="left:2570px;top:173px;" width="58" height="58" viewBox="0 0 58 58"><rect x="1.5" y="1.5" width="54" height="54" fill="#f5f5f5" stroke="#2b2b2b" stroke-width="2.4"/><rect x="1.5" y="1.5" width="54" height="8" fill="#bdbdbd" stroke="#2b2b2b" stroke-width="2"/><path d="M1.5 40 H55 M19 40 V55 M38 40 V55" stroke="#9a9a9a" stroke-width="1.8"/><circle cx="28" cy="26" r="18.5" fill="#fafafa" stroke="#2b2b2b" stroke-width="2.4"/><line x1="41" y1="39" x2="56" y2="55" stroke="#2b2b2b" stroke-width="3"/><rect x="17" y="23" width="6" height="10" fill="#bdbdbd" stroke="#555" stroke-width="1.2"/><rect x="23" y="15" width="6" height="18" fill="#1b6fb8" stroke="#0e4d86" stroke-width="1.2"/><rect x="29" y="19" width="6" height="14" fill="#7fb8e8" stroke="#1b6fb8" stroke-width="1.2"/></svg>
<span class="t" style="left:2570px;top:242.5px;font-size:24px;line-height:24px;color:#262626;width:74.6px;text-align-last:justify;transform:scaleX(0.784);">データ</span>
<span class="t" style="left:2575px;top:273.0px;font-size:24px;line-height:24px;color:#262626;width:48.6px;text-align-last:justify;transform:scaleX(0.979);">分析</span>
<span class="t" style="left:2649.5px;top:241.0px;font-size:27px;line-height:27px;color:#1f1f1f;width:84.6px;text-align-last:justify;transform:scaleX(0.946);">Copilot</span>
<div style="left:17px;top:373.5px;width:200px;height:51.5px;background:#fff;border-radius:9px;box-shadow:0 0 1px rgba(0,0,0,.25);"></div>
<span class="t" style="left:24px;top:387.5px;font-size:29px;line-height:29px;color:#1f1f1f;width:36.1px;text-align-last:justify;transform:scaleX(0.902);">A1</span>
<svg style="left:199.5px;top:395.25px;" width="18" height="11.5" viewBox="0 0 18 11.5"><polyline points="2,2 9.0,9.5 16,2" fill="none" stroke="#2b2b2b" stroke-width="2" stroke-linecap="round" stroke-linejoin="round"/></svg>
<div style="left:236.5px;top:389px;width:4px;height:4px;background:#444;"></div>
<div style="left:236.5px;top:398px;width:4px;height:4px;background:#444;"></div>
<div style="left:236.5px;top:407px;width:4px;height:4px;background:#444;"></div>
<div style="left:259px;top:373.5px;width:168px;height:51.5px;background:#fff;border-radius:9px;box-shadow:0 0 1px rgba(0,0,0,.25);"></div>
<svg style="left:271px;top:388px;" width="24" height="24" viewBox="0 0 24 24"><path d="M1 1 L23 23 M23 1 L1 23" stroke="#a6a6a6" stroke-width="1.8"/></svg>
<svg style="left:315px;top:388px;" width="32" height="24" viewBox="0 0 32 24"><path d="M1 13 L11 23 L31 1" fill="none" stroke="#a6a6a6" stroke-width="1.8"/></svg>
<span class="t" style="left:364px;top:379.5px;font-size:35px;line-height:35px;color:#2b2b2b;width:25.9px;text-align-last:justify;transform:scaleX(1.148);font-family:'Liberation Serif',serif;-webkit-text-stroke:.5px #2b2b2b;"><i>fx</i></span>
<svg style="left:403.0px;top:394.75px;" width="21" height="12.5" viewBox="0 0 21 12.5"><polyline points="2,2 10.5,10.5 19,2" fill="none" stroke="#8a8a8a" stroke-width="1.8" stroke-linecap="round" stroke-linejoin="round"/></svg>
<div style="left:437px;top:373.5px;width:2425.5px;height:51.5px;background:#fff;border-radius:9px;box-shadow:0 0 1px rgba(0,0,0,.25);"></div>
<span class="t" style="left:461px;top:386.0px;font-size:26px;line-height:26px;color:#444;width:26.6px;text-align-last:justify;">年</span>
<svg style="left:2834.0px;top:392.5px;" width="22" height="13" viewBox="0 0 22 13"><polyline points="2,2 11.0,11 20,2" fill="none" stroke="#2b2b2b" stroke-width="2" stroke-linecap="round" stroke-linejoin="round"/></svg>
<div style="left:0px;top:440px;width:2141px;height:1276px;background:#fff;"></div>
<div style="left:0px;top:440px;width:2141px;height:46px;background:#f0f0f0;"></div>
<div style="left:60px;top:440px;width:533.6px;height:45px;background:#d3d3d3;"></div>
<div style="left:0px;top:485.3px;width:2141px;height:1.5px;background:#9c9c9c;"></div>
<svg style="left:18px;top:444px;" width="42" height="40" viewBox="0 0 42 40"><path d="M40 1 V38 H1 Z" fill="#b2b2b2"/></svg>
<div style="left:0px;top:486px;width:61px;height:1230px;background:#f0f0f0;"></div>
<div style="left:0px;top:486px;width:60px;height:250px;background:#d3d3d3;"></div>
<div style="left:60.2px;top:486px;width:1.2px;height:1230px;background:#9c9c9c;"></div>
<span class="t" style="left:91.65px;top:444.0px;font-size:25px;line-height:25px;color:#1e6b41;text-align:center;width:28px;">A</span>
<div style="left:151.10000000000002px;top:441px;width:1.3px;height:45px;background:#bdbdbd;"></div>
<span class="t" style="left:197.35px;top:444.0px;font-size:25px;line-height:25px;color:#1e6b41;text-align:center;width:28px;">B</span>
<div style="left:271.2px;top:441px;width:1.3px;height:45px;background:#bdbdbd;"></div>
<span class="t" style="left:343.4px;top:444.0px;font-size:25px;line-height:25px;color:#1e6b41;text-align:center;width:28px;">C</span>
<div style="left:443.2px;top:441px;width:1.3px;height:45px;background:#bdbdbd;"></div>
<span class="t" style="left:504.5px;top:444.0px;font-size:25px;line-height:25px;color:#1e6b41;text-align:center;width:28px;">D</span>
<div style="left:593.4px;top:441px;width:1.3px;height:45px;background:#c6c6c6;"></div>
<span class="t" style="left:651.6px;top:444.0px;font-size:25px;line-height:25px;color:#1a1a1a;text-align:center;width:28px;">E</span>
<div style="left:737.4px;top:441px;width:1.3px;height:45px;background:#c6c6c6;"></div>
<span class="t" style="left:795.6px;top:444.0px;font-size:25px;line-height:25px;color:#1a1a1a;text-align:center;width:28px;">F</span>
<div style="left:881.4px;top:441px;width:1.3px;height:45px;background:#c6c6c6;"></div>
<span class="t" style="left:939.5999999999999px;top:444.0px;font-size:25px;line-height:25px;color:#1a1a1a;text-align:center;width:28px;">G</span>
<div style="left:1025.3999999999999px;top:441px;width:1.3px;height:45px;background:#c6c6c6;"></div>
<span class="t" style="left:1083.6px;top:444.0px;font-size:25px;line-height:25px;color:#1a1a1a;text-align:center;width:28px;">H</span>
<div style="left:1169.3999999999999px;top:441px;width:1.3px;height:45px;background:#c6c6c6;"></div>
<span class="t" style="left:1227.6px;top:444.0px;font-size:25px;line-height:25px;color:#1a1a1a;text-align:center;width:28px;">I</span>
<div style="left:1313.3999999999999px;top:441px;width:1.3px;height:45px;background:#c6c6c6;"></div>
<span class="t" style="left:1371.6px;top:444.0px;font-size:25px;line-height:25px;color:#1a1a1a;text-align:center;width:28px;">J</span>
<div style="left:1457.3999999999999px;top:441px;width:1.3px;height:45px;background:#c6c6c6;"></div>
<span class="t" style="left:1515.6px;top:444.0px;font-size:25px;line-height:25px;color:#1a1a1a;text-align:center;width:28px;">K</span>
<div style="left:1601.3999999999999px;top:441px;width:1.3px;height:45px;background:#c6c6c6;"></div>
<span class="t" style="left:1659.6px;top:444.0px;font-size:25px;line-height:25px;color:#1a1a1a;text-align:center;width:28px;">L</span>
<div style="left:1745.3999999999999px;top:441px;width:1.3px;height:45px;background:#c6c6c6;"></div>
<span class="t" style="left:1803.6px;top:444.0px;font-size:25px;line-height:25px;color:#1a1a1a;text-align:center;width:28px;">M</span>
<div style="left:1889.3999999999999px;top:441px;width:1.3px;height:45px;background:#c6c6c6;"></div>
<span class="t" style="left:1947.6px;top:444.0px;font-size:25px;line-height:25px;color:#1a1a1a;text-align:center;width:28px;">N</span>
<div style="left:2033.3999999999999px;top:441px;width:1.3px;height:45px;background:#c6c6c6;"></div>
<span class="t" style="left:2091.6px;top:444.0px;font-size:25px;line-height:25px;color:#1a1a1a;text-align:center;width:28px;">O</span>
<div style="left:151px;top:486px;width:1px;height:1230px;background:#e1e1e1;"></div>
<div style="left:271px;top:486px;width:1px;height:1230px;background:#e1e1e1;"></div>
<div style="left:443px;top:486px;width:1px;height:1230px;background:#e1e1e1;"></div>
<div style="left:594px;top:486px;width:1px;height:1230px;background:#e1e1e1;"></div>
<div style="left:738px;top:486px;width:1px;height:1230px;background:#e1e1e1;"></div>
<div style="left:882px;top:486px;width:1px;height:1230px;background:#e1e1e1;"></div>
<div style="left:1026px;top:486px;width:1px;height:1230px;background:#e1e1e1;"></div>
<div style="left:1170px;top:486px;width:1px;height:1230px;background:#e1e1e1;"></div>
<div style="left:1314px;top:486px;width:1px;height:1230px;background:#e1e1e1;"></div>
<div style="left:1458px;top:486px;width:1px;height:1230px;background:#e1e1e1;"></div>
<div style="left:1602px;top:486px;width:1px;height:1230px;background:#e1e1e1;"></div>
<div style="left:1746px;top:486px;width:1px;height:1230px;background:#e1e1e1;"></div>
<div style="left:1890px;top:486px;width:1px;height:1230px;background:#e1e1e1;"></div>
<div style="left:2034px;top:486px;width:1px;height:1230px;background:#e1e1e1;"></div>
<div style="left:0px;top:535.5px;width:60px;height:1.5px;background:#c2c2c2;"></div>
<div style="left:60px;top:535.5px;width:2081px;height:1px;background:#e1e1e1;"></div>
<span class="t" style="left:4px;top:500.5px;font-size:25px;line-height:25px;color:#1e6b41;text-align:center;width:52px;">1</span>
<div style="left:0px;top:585.5px;width:60px;height:1.5px;background:#c2c2c2;"></div>
<div style="left:60px;top:585.5px;width:2081px;height:1px;background:#e1e1e1;"></div>
<span class="t" style="left:4px;top:550.5px;font-size:25px;line-height:25px;color:#1e6b41;text-align:center;width:52px;">2</span>
<div style="left:0px;top:635.5px;width:60px;height:1.5px;background:#c2c2c2;"></div>
<div style="left:60px;top:635.5px;width:2081px;height:1px;background:#e1e1e1;"></div>
<span class="t" style="left:4px;top:600.5px;font-size:25px;line-height:25px;color:#1e6b41;text-align:center;width:52px;">3</span>
<div style="left:0px;top:685.5px;width:60px;height:1.5px;background:#c2c2c2;"></div>
<div style="left:60px;top:685.5px;width:2081px;height:1px;background:#e1e1e1;"></div>
<span class="t" style="left:4px;top:650.5px;font-size:25px;line-height:25px;color:#1e6b41;text-align:center;width:52px;">4</span>
<div style="left:0px;top:735.5px;width:60px;height:1.5px;background:#c2c2c2;"></div>
<div style="left:60px;top:735.5px;width:2081px;height:1px;background:#e1e1e1;"></div>
<span class="t" style="left:4px;top:700.5px;font-size:25px;line-height:25px;color:#1e6b41;text-align:center;width:52px;">5</span>
<div style="left:0px;top:785.5px;width:60px;height:1.5px;background:#c2c2c2;"></div>
<div style="left:60px;top:785.5px;width:2081px;height:1px;background:#e1e1e1;"></div>
<span class="t" style="left:4px;top:750.5px;font-size:25px;line-height:25px;color:#1a1a1a;text-align:center;width:52px;">6</span>
<div style="left:0px;top:835.5px;width:60px;height:1.5px;background:#c2c2c2;"></div>
<div style="left:60px;top:835.5px;width:2081px;height:1px;background:#e1e1e1;"></div>
<span class="t" style="left:4px;top:800.5px;font-size:25px;line-height:25px;color:#1a1a1a;text-align:center;width:52px;">7</span>
<div style="left:0px;top:885.5px;width:60px;height:1.5px;background:#c2c2c2;"></div>
<div style="left:60px;top:885.5px;width:2081px;height:1px;background:#e1e1e1;"></div>
<span class="t" style="left:4px;top:850.5px;font-size:25px;line-height:25px;color:#1a1a1a;text-align:center;width:52px;">8</span>
<div style="left:0px;top:935.5px;width:60px;height:1.5px;background:#c2c2c2;"></div>
<div style="left:60px;top:935.5px;width:2081px;height:1px;background:#e1e1e1;"></div>
<span class="t" style="left:4px;top:900.5px;font-size:25px;line-height:25px;color:#1a1a1a;text-align:center;width:52px;">9</span>
<div style="left:0px;top:985.5px;width:60px;height:1.5px;background:#c2c2c2;"></div>
<div style="left:60px;top:985.5px;width:2081px;height:1px;background:#e1e1e1;"></div>
<span class="t" style="left:4px;top:950.5px;font-size:25px;line-height:25px;color:#1a1a1a;text-align:center;width:52px;">10</span>
<div style="left:0px;top:1035.5px;width:60px;height:1.5px;background:#c2c2c2;"></div>
<div style="left:60px;top:1035.5px;width:2081px;height:1px;background:#e1e1e1;"></div>
<span class="t" style="left:4px;top:1000.5px;font-size:25px;line-height:25px;color:#1a1a1a;text-align:center;width:52px;">11</span>
<div style="left:0px;top:1085.5px;width:60px;height:1.5px;background:#c2c2c2;"></div>
<div style="left:60px;top:1085.5px;width:2081px;height:1px;background:#e1e1e1;"></div>
<span class="t" style="left:4px;top:1050.5px;font-size:25px;line-height:25px;color:#1a1a1a;text-align:center;width:52px;">12</span>
<div style="left:0px;top:1135.5px;width:60px;height:1.5px;background:#c2c2c2;"></div>
<div style="left:60px;top:1135.5px;width:2081px;height:1px;background:#e1e1e1;"></div>
<span class="t" style="left:4px;top:1100.5px;font-size:25px;line-height:25px;color:#1a1a1a;text-align:center;width:52px;">13</span>
<div style="left:0px;top:1185.5px;width:60px;height:1.5px;background:#c2c2c2;"></div>
<div style="left:60px;top:1185.5px;width:2081px;height:1px;background:#e1e1e1;"></div>
<span class="t" style="left:4px;top:1150.5px;font-size:25px;line-height:25px;color:#1a1a1a;text-align:center;width:52px;">14</span>
<div style="left:0px;top:1235.5px;width:60px;height:1.5px;background:#c2c2c2;"></div>
<div style="left:60px;top:1235.5px;width:2081px;height:1px;background:#e1e1e1;"></div>
<span class="t" style="left:4px;top:1200.5px;font-size:25px;line-height:25px;color:#1a1a1a;text-align:center;width:52px;">15</span>
<div style="left:0px;top:1285.5px;width:60px;height:1.5px;background:#c2c2c2;"></div>
<div style="left:60px;top:1285.5px;width:2081px;height:1px;background:#e1e1e1;"></div>
<span class="t" style="left:4px;top:1250.5px;font-size:25px;line-height:25px;color:#1a1a1a;text-align:center;width:52px;">16</span>
<div style="left:0px;top:1335.5px;width:60px;height:1.5px;background:#c2c2c2;"></div>
<div style="left:60px;top:1335.5px;width:2081px;height:1px;background:#e1e1e1;"></div>
<span class="t" style="left:4px;top:1300.5px;font-size:25px;line-height:25px;color:#1a1a1a;text-align:center;width:52px;">17</span>
<div style="left:0px;top:1385.5px;width:60px;height:1.5px;background:#c2c2c2;"></div>
<div style="left:60px;top:1385.5px;width:2081px;height:1px;background:#e1e1e1;"></div>
<span class="t" style="left:4px;top:1350.5px;font-size:25px;line-height:25px;color:#1a1a1a;text-align:center;width:52px;">18</span>
<div style="left:0px;top:1435.5px;width:60px;height:1.5px;background:#c2c2c2;"></div>
<div style="left:60px;top:1435.5px;width:2081px;height:1px;background:#e1e1e1;"></div>
<span class="t" style="left:4px;top:1400.5px;font-size:25px;line-height:25px;color:#1a1a1a;text-align:center;width:52px;">19</span>
<div style="left:0px;top:1485.5px;width:60px;height:1.5px;background:#c2c2c2;"></div>
<div style="left:60px;top:1485.5px;width:2081px;height:1px;background:#e1e1e1;"></div>
<span class="t" style="left:4px;top:1450.5px;font-size:25px;line-height:25px;color:#1a1a1a;text-align:center;width:52px;">20</span>
<div style="left:0px;top:1535.5px;width:60px;height:1.5px;background:#c2c2c2;"></div>
<div style="left:60px;top:1535.5px;width:2081px;height:1px;background:#e1e1e1;"></div>
<span class="t" style="left:4px;top:1500.5px;font-size:25px;line-height:25px;color:#1a1a1a;text-align:center;width:52px;">21</span>
<div style="left:0px;top:1585.5px;width:60px;height:1.5px;background:#c2c2c2;"></div>
<div style="left:60px;top:1585.5px;width:2081px;height:1px;background:#e1e1e1;"></div>
<span class="t" style="left:4px;top:1550.5px;font-size:25px;line-height:25px;color:#1a1a1a;text-align:center;width:52px;">22</span>
<div style="left:0px;top:1635.5px;width:60px;height:1.5px;background:#c2c2c2;"></div>
<div style="left:60px;top:1635.5px;width:2081px;height:1px;background:#e1e1e1;"></div>
<span class="t" style="left:4px;top:1600.5px;font-size:25px;line-height:25px;color:#1a1a1a;text-align:center;width:52px;">23</span>
<div style="left:0px;top:1685.5px;width:60px;height:1.5px;background:#c2c2c2;"></div>
<div style="left:60px;top:1685.5px;width:2081px;height:1px;background:#e1e1e1;"></div>
<span class="t" style="left:4px;top:1650.5px;font-size:25px;line-height:25px;color:#1a1a1a;text-align:center;width:52px;">24</span>
<div style="left:0px;top:1686px;width:60px;height:30px;overflow:hidden;"><span class="t" style="left:4px;top:14.5px;width:52px;text-align:center;font-size:25px;line-height:25px;color:#1a1a1a">25</span></div>
<div style="left:62px;top:486px;width:531px;height:50px;background:#114d68;"></div>
<div style="left:62px;top:486px;width:89.30000000000001px;height:50px;background:#156082;"></div>
<div style="left:62px;top:536px;width:531px;height:50px;background:#99b5c1;"></div>
<div style="left:62px;top:586px;width:531px;height:50px;background:#cbcbcb;"></div>
<div style="left:62px;top:636px;width:531px;height:50px;background:#99b5c1;"></div>
<div style="left:62px;top:686px;width:531px;height:50px;background:#cbcbcb;"></div>
<div style="left:62px;top:586px;width:531px;height:1px;background:#4a93b5;"></div>
<div style="left:62px;top:585px;width:531px;height:1px;background:#7fa9bb;"></div>
<div style="left:62px;top:636px;width:531px;height:1px;background:#4a93b5;"></div>
<div style="left:62px;top:635px;width:531px;height:1px;background:#a5bcc6;"></div>
<div style="left:62px;top:686px;width:531px;height:1px;background:#4a93b5;"></div>
<div style="left:62px;top:685px;width:531px;height:1px;background:#7fa9bb;"></div>
<div style="left:151px;top:586px;width:1px;height:49px;background:#bdbdbd;"></div>
<div style="left:151px;top:686px;width:1px;height:49px;background:#bdbdbd;"></div>
<div style="left:151px;top:536px;width:1px;height:49px;background:#96b2be;"></div>
<div style="left:151px;top:636px;width:1px;height:49px;background:#96b2be;"></div>
<div style="left:271px;top:586px;width:1px;height:49px;background:#bdbdbd;"></div>
<div style="left:271px;top:686px;width:1px;height:49px;background:#bdbdbd;"></div>
<div style="left:271px;top:536px;width:1px;height:49px;background:#96b2be;"></div>
<div style="left:271px;top:636px;width:1px;height:49px;background:#96b2be;"></div>
<div style="left:443px;top:586px;width:1px;height:49px;background:#bdbdbd;"></div>
<div style="left:443px;top:686px;width:1px;height:49px;background:#bdbdbd;"></div>
<div style="left:443px;top:536px;width:1px;height:49px;background:#96b2be;"></div>
<div style="left:443px;top:636px;width:1px;height:49px;background:#96b2be;"></div>
<span class="t" style="left:68px;top:496.0px;font-size:28px;line-height:28px;color:#fff;font-weight:bold;width:28.6px;text-align-last:justify;transform:scaleX(0.964);">年</span>
<span class="t" style="left:157.5px;top:496.0px;font-size:28px;line-height:28px;color:#d9d9d9;font-weight:bold;width:48.8px;text-align-last:justify;transform:scaleX(1.006);">iOS</span>
<span class="t" style="left:278px;top:496.0px;font-size:28px;line-height:28px;color:#d9d9d9;font-weight:bold;width:107.9px;text-align-last:justify;transform:scaleX(1.006);">Android</span>
<span class="t" style="left:450px;top:496.0px;font-size:28px;line-height:28px;color:#d9d9d9;font-weight:bold;width:86.6px;text-align-last:justify;transform:scaleX(0.977);">その他</span>
<div style="left:117px;top:501px;width:34px;height:34px;background:#fff;"></div>
<svg style="left:126.5px;top:515px;" width="16" height="9" viewBox="0 0 16 9"><path d="M0 0 H14 L7 7.5 Z" fill="#6a6a6a"/></svg>
<div style="left:237px;top:501px;width:34px;height:34px;background:#c9c9c9;border:1px solid #b9b9b9;"></div>
<svg style="left:246.5px;top:515px;" width="16" height="9" viewBox="0 0 16 9"><path d="M0 0 H14 L7 7.5 Z" fill="#6a6a6a"/></svg>
<div style="left:409px;top:501px;width:34px;height:34px;background:#c9c9c9;border:1px solid #b9b9b9;"></div>
<svg style="left:418.5px;top:515px;" width="16" height="9" viewBox="0 0 16 9"><path d="M0 0 H14 L7 7.5 Z" fill="#6a6a6a"/></svg>
<div style="left:558px;top:501px;width:34px;height:34px;background:#c9c9c9;border:1px solid #b9b9b9;"></div>
<svg style="left:567.5px;top:515px;" width="16" height="9" viewBox="0 0 16 9"><path d="M0 0 H14 L7 7.5 Z" fill="#6a6a6a"/></svg>
<span class="t" style="left:85px;top:545.2px;font-size:29px;line-height:29px;color:#111;width:65.1px;text-align-last:justify;transform:scaleX(0.946);">2021</span>
<span class="t" style="left:174.7px;top:545.2px;font-size:29px;line-height:29px;color:#111;width:99.0px;text-align-last:justify;transform:scaleX(0.935);">60.80%</span>
<span class="t" style="left:346.7px;top:545.2px;font-size:29px;line-height:29px;color:#111;width:99.0px;text-align-last:justify;transform:scaleX(0.935);">39.70%</span>
<span class="t" style="left:511.70000000000005px;top:545.2px;font-size:29px;line-height:29px;color:#111;width:82.8px;text-align-last:justify;transform:scaleX(0.936);">0.20%</span>
<span class="t" style="left:85px;top:595.2px;font-size:29px;line-height:29px;color:#111;width:65.1px;text-align-last:justify;transform:scaleX(0.946);">2022</span>
<span class="t" style="left:174.7px;top:595.2px;font-size:29px;line-height:29px;color:#111;width:99.0px;text-align-last:justify;transform:scaleX(0.935);">60.50%</span>
<span class="t" style="left:346.7px;top:595.2px;font-size:29px;line-height:29px;color:#111;width:99.0px;text-align-last:justify;transform:scaleX(0.935);">39.30%</span>
<span class="t" style="left:511.70000000000005px;top:595.2px;font-size:29px;line-height:29px;color:#111;width:82.8px;text-align-last:justify;transform:scaleX(0.936);">0.20%</span>
<span class="t" style="left:85px;top:645.2px;font-size:29px;line-height:29px;color:#111;width:65.1px;text-align-last:justify;transform:scaleX(0.946);">2023</span>
<span class="t" style="left:174.7px;top:645.2px;font-size:29px;line-height:29px;color:#111;width:99.0px;text-align-last:justify;transform:scaleX(0.935);">57.80%</span>
<span class="t" style="left:346.7px;top:645.2px;font-size:29px;line-height:29px;color:#111;width:99.0px;text-align-last:justify;transform:scaleX(0.935);">42.00%</span>
<span class="t" style="left:511.70000000000005px;top:645.2px;font-size:29px;line-height:29px;color:#111;width:82.8px;text-align-last:justify;transform:scaleX(0.936);">0.20%</span>
<span class="t" style="left:85px;top:695.2px;font-size:29px;line-height:29px;color:#111;width:65.1px;text-align-last:justify;transform:scaleX(0.946);">2024</span>
<span class="t" style="left:174.7px;top:695.2px;font-size:29px;line-height:29px;color:#111;width:99.0px;text-align-last:justify;transform:scaleX(0.935);">57.80%</span>
<span class="t" style="left:346.7px;top:695.2px;font-size:29px;line-height:29px;color:#111;width:99.0px;text-align-last:justify;transform:scaleX(0.935);">42.00%</span>
<span class="t" style="left:511.70000000000005px;top:695.2px;font-size:29px;line-height:29px;color:#111;width:82.8px;text-align-last:justify;transform:scaleX(0.936);">0.20%</span>
<div style="left:59px;top:484px;width:537px;height:254px;border:3px solid #1e7145;"></div>
<div style="left:62px;top:487px;width:531px;height:248px;border:1px solid #f6f6f6;"></div>
<div style="left:588px;top:731px;width:9px;height:9px;background:#fff;"></div>
<div style="left:589px;top:732px;width:8px;height:8px;background:#1e7145;"></div>
<div style="left:598px;top:487px;width:51px;height:52px;background:#fff;border:2px solid #8a8a8a;border-radius:9px;box-shadow:2px 4px 9px rgba(0,0,0,.22);"></div>
<svg style="left:607.5px;top:499px;" width="30" height="27.5" viewBox="0 0 59 54"><defs>
<linearGradient id="cpA" x1="0" y1="0" x2="0" y2="1"><stop offset="0" stop-color="#2ebcfa"/><stop offset=".25" stop-color="#0f8fe2"/><stop offset=".55" stop-color="#4aae79"/><stop offset=".8" stop-color="#b5c02f"/><stop offset="1" stop-color="#ffcb00"/></linearGradient>
<linearGradient id="cpB" x1="0" y1="0" x2="1" y2="1"><stop offset="0" stop-color="#0230c2"/><stop offset=".6" stop-color="#1d63d8"/><stop offset="1" stop-color="#0a8df2"/></linearGradient>
<linearGradient id="cpC" x1=".75" y1="0" x2=".3" y2="1"><stop offset="0" stop-color="#b46bf5"/><stop offset=".15" stop-color="#a84be6"/><stop offset=".55" stop-color="#ef568c"/><stop offset=".8" stop-color="#f8886e"/><stop offset="1" stop-color="#ffad4f"/></linearGradient>
<linearGradient id="cpD" x1="0" y1="0" x2="1" y2="1"><stop offset="0" stop-color="#ff9d4c"/><stop offset=".55" stop-color="#ff5a37"/><stop offset="1" stop-color="#cf2f33"/></linearGradient>
</defs><path d="M36 0 C33.5 .5 32 2.5 31 6 L28 17.5 C29 15.6 30 15.2 32 15.2 L49 15.2 C45.5 14 44.5 11 43 6 C42 2.5 40.5 0 37 0 Z" fill="url(#cpB)"/>
<path d="M13.5 0 C9 .5 7 5 5.5 10 L.8 28 C-.6 34 1 38.7 7 38.7 L17 38.7 C21 38.7 22.5 36 23.7 32 L31 6 C32 2.5 33.5 .5 36.5 0 Z" fill="url(#cpA)"/>
<path d="M10 38.7 C13.5 39.5 14.5 42 16 47 C17 51 18.5 53.9 22 53.9 L24.5 53.9 C27 53 28 50 29 47 L31.5 37.5 C30.5 38.7 29 38.7 27 38.7 Z" fill="url(#cpD)"/>
<path d="M39.5 15.2 H52 C57.5 15.2 59.5 19 58.3 25 L53.5 43 C52 49 50 53.9 45 53.9 L23 53.9 C27 53.5 28 50 29 47 L35 23 C36 19 37 15.7 39.5 15.2 Z" fill="url(#cpC)"/></svg>
<div style="left:2141px;top:440px;width:39px;height:1278px;background:#e9e9e9;"></div>
<div style="left:2144px;top:440.5px;width:34px;height:1278px;background:#f6f6f6;border-radius:17px;"></div>
<svg style="left:2152px;top:450px;" width="18" height="13" viewBox="0 0 18 13"><path d="M9 0.5 Q10 0.5 11 2 L17 10 Q18 12.5 15.5 12.5 H2.5 Q0 12.5 1 10 L7 2 Q8 .5 9 .5 Z" fill="#6e6e6e"/></svg>
<div style="left:2153px;top:474px;width:16px;height:1189px;background:#717171;border-radius:8px;"></div>
<svg style="left:2152px;top:1696px;" width="18" height="13" viewBox="0 0 18 13"><path d="M9 12.5 Q10 12.5 11 11 L17 3 Q18 .5 15.5 .5 H2.5 Q0 .5 1 3 L7 11 Q8 12.5 9 12.5 Z" fill="#6e6e6e"/></svg>
<div style="left:2180px;top:440px;width:692px;height:1341px;background:#f0f0f0;"></div>
<div style="left:2179.5px;top:443px;width:1.5px;height:1335px;background:#c9c9c9;"></div>
<div style="left:2196px;top:457px;width:668px;height:1306px;background:#edebe9;"></div>
<div style="left:2212px;top:487px;width:32px;height:2px;background:#333;"></div>
<div style="left:2212px;top:497px;width:32px;height:2px;background:#333;"></div>
<div style="left:2212px;top:507px;width:32px;height:2px;background:#333;"></div>
<span class="t" style="left:2269px;top:484.0px;font-size:33px;line-height:33px;color:#1f1f1f;width:103.3px;text-align-last:justify;transform:scaleX(1.012);-webkit-text-stroke:.8px #1f1f1f;">Copilot</span>
<svg style="left:2762.0px;top:493.0px;" width="28" height="16" viewBox="0 0 28 16"><polyline points="2,2 14.0,14 26,2" fill="none" stroke="#2b2b2b" stroke-width="2" stroke-linecap="round" stroke-linejoin="round"/></svg>
<svg style="left:2828px;top:487px;" width="24" height="24" viewBox="0 0 24 24"><path d="M1 1 L23 23 M23 1 L1 23" stroke="#2b2b2b" stroke-width="2" stroke-linecap="round"/></svg>
<div style="left:2196px;top:557px;width:646px;height:712px;overflow:hidden;">
<svg style="left:35px;top:-24px;" width="44" height="40.3" viewBox="0 0 59 54"><path d="M36 0 C33.5 .5 32 2.5 31 6 L28 17.5 C29 15.6 30 15.2 32 15.2 L49 15.2 C45.5 14 44.5 11 43 6 C42 2.5 40.5 0 37 0 Z" fill="url(#cpB)"/>
<path d="M13.5 0 C9 .5 7 5 5.5 10 L.8 28 C-.6 34 1 38.7 7 38.7 L17 38.7 C21 38.7 22.5 36 23.7 32 L31 6 C32 2.5 33.5 .5 36.5 0 Z" fill="url(#cpA)"/>
<path d="M10 38.7 C13.5 39.5 14.5 42 16 47 C17 51 18.5 53.9 22 53.9 L24.5 53.9 C27 53 28 50 29 47 L31.5 37.5 C30.5 38.7 29 38.7 27 38.7 Z" fill="url(#cpD)"/>
<path d="M39.5 15.2 H52 C57.5 15.2 59.5 19 58.3 25 L53.5 43 C52 49 50 53.9 45 53.9 L23 53.9 C27 53.5 28 50 29 47 L35 23 C36 19 37 15.7 39.5 15.2 Z" fill="url(#cpC)"/></svg>
<span class="t" style="left:98px;top:-16.5px;font-size:27px;line-height:27px;color:#242424;font-weight:bold;width:93.6px;text-align-last:justify;transform:scaleX(0.989);">Copilot</span>
<span class="t" style="left:41.5px;top:50.2px;font-size:19.5px;line-height:19.5px;color:#616161;width:544.4px;text-align-last:justify;transform:scaleX(0.977);">AI で生成されたコンテンツは誤りを含む可能性があります。</span>
<span class="t" style="left:35px;top:110.5px;font-size:27px;line-height:27px;color:#242424;width:559.7px;text-align-last:justify;transform:scaleX(1.010);">以下は、日本と世界の2021年から2024年まで</span>
<span class="t" style="left:35px;top:149.5px;font-size:27px;line-height:27px;color:#242424;width:539.6px;text-align-last:justify;transform:scaleX(0.994);">のスマートフォンのOS毎のシェア状況です</span>
<div style="left:38px;top:188px;width:26px;height:26px;background:#f7f7f7;border:1.5px solid #dedede;border-radius:7px;"></div>
<span class="t" style="left:46px;top:193.0px;font-size:18px;line-height:18px;color:#333;">1</span>
<div style="left:74px;top:188px;width:26px;height:26px;background:#f7f7f7;border:1.5px solid #dedede;border-radius:7px;"></div>
<span class="t" style="left:82px;top:193.0px;font-size:18px;line-height:18px;color:#333;">2</span>
<div style="left:110px;top:188px;width:26px;height:26px;background:#f7f7f7;border:1.5px solid #dedede;border-radius:7px;"></div>
<span class="t" style="left:118px;top:193.0px;font-size:18px;line-height:18px;color:#333;">3</span>
<span class="t" style="left:142px;top:192.0px;font-size:22px;line-height:22px;color:#333;">:</span>
<span class="t" style="left:36.5px;top:269.0px;font-size:32px;line-height:32px;color:#242424;font-weight:bold;width:504.8px;text-align-last:justify;transform:scaleX(0.985);-webkit-text-stroke:.7px #242424;">日本のスマートフォンOSシェア率</span>
<div style="left:35px;top:341px;width:576px;height:35px;background:#f5f5f5;border-radius:7px 7px 0 0;"></div>
<span class="t" style="left:46px;top:347.5px;font-size:23px;line-height:23px;color:#242424;font-weight:bold;width:23.6px;text-align-last:justify;">年</span>
<span class="t" style="left:162.5px;top:347.5px;font-size:23px;line-height:23px;color:#242424;width:38.9px;text-align-last:justify;transform:scaleX(0.952);-webkit-text-stroke:.5px #242424;">iOS</span>
<span class="t" style="left:297px;top:347.5px;font-size:23px;line-height:23px;color:#242424;width:79.9px;text-align-last:justify;transform:scaleX(1.097);-webkit-text-stroke:.5px #242424;">Android</span>
<span class="t" style="left:472px;top:347.5px;font-size:23px;line-height:23px;color:#242424;font-weight:bold;width:71.6px;text-align-last:justify;transform:scaleX(0.993);">その他</span>
<span class="t" style="left:46px;top:384.8px;font-size:22.5px;line-height:22.5px;color:#242424;width:50.7px;text-align-last:justify;">2021</span>
<span class="t" style="left:162.5px;top:384.8px;font-size:22.5px;line-height:22.5px;color:#242424;width:64.4px;text-align-last:justify;transform:scaleX(0.979);">60.8%</span>
<span class="t" style="left:297px;top:384.8px;font-size:22.5px;line-height:22.5px;color:#242424;width:64.4px;text-align-last:justify;transform:scaleX(0.987);">39.7%</span>
<span class="t" style="left:472px;top:384.8px;font-size:22.5px;line-height:22.5px;color:#242424;width:51.9px;text-align-last:justify;transform:scaleX(0.965);">0.2%</span>
<div style="left:35px;top:413.0px;width:576px;height:1.5px;background:#d1d1d1;"></div>
<span class="t" style="left:46px;top:422.5px;font-size:22.5px;line-height:22.5px;color:#242424;width:50.7px;text-align-last:justify;">2022</span>
<span class="t" style="left:162.5px;top:422.5px;font-size:22.5px;line-height:22.5px;color:#242424;width:64.4px;text-align-last:justify;transform:scaleX(0.979);">60.5%</span>
<span class="t" style="left:297px;top:422.5px;font-size:22.5px;line-height:22.5px;color:#242424;width:64.4px;text-align-last:justify;transform:scaleX(0.987);">39.3%</span>
<span class="t" style="left:472px;top:422.5px;font-size:22.5px;line-height:22.5px;color:#242424;width:51.9px;text-align-last:justify;transform:scaleX(0.965);">0.2%</span>
<div style="left:35px;top:450.79999999999995px;width:576px;height:1.5px;background:#d1d1d1;"></div>
<span class="t" style="left:46px;top:460.3px;font-size:22.5px;line-height:22.5px;color:#242424;width:50.7px;text-align-last:justify;">2023</span>
<span class="t" style="left:162.5px;top:460.3px;font-size:22.5px;line-height:22.5px;color:#242424;width:64.4px;text-align-last:justify;transform:scaleX(0.979);">57.8%</span>
<span class="t" style="left:297px;top:460.3px;font-size:22.5px;line-height:22.5px;color:#242424;width:64.4px;text-align-last:justify;transform:scaleX(0.987);">42.0%</span>
<span class="t" style="left:472px;top:460.3px;font-size:22.5px;line-height:22.5px;color:#242424;width:51.9px;text-align-last:justify;transform:scaleX(0.965);">0.2%</span>
<div style="left:35px;top:488.5999999999999px;width:576px;height:1.5px;background:#d1d1d1;"></div>
<span class="t" style="left:46px;top:498.2px;font-size:22.5px;line-height:22.5px;color:#242424;width:50.7px;text-align-last:justify;">2024</span>
<span class="t" style="left:162.5px;top:498.2px;font-size:22.5px;line-height:22.5px;color:#242424;width:64.4px;text-align-last:justify;transform:scaleX(0.979);">57.8%</span>
<span class="t" style="left:297px;top:498.2px;font-size:22.5px;line-height:22.5px;color:#242424;width:64.4px;text-align-last:justify;transform:scaleX(0.987);">42.0%</span>
<span class="t" style="left:472px;top:498.2px;font-size:22.5px;line-height:22.5px;color:#242424;width:51.9px;text-align-last:justify;transform:scaleX(0.965);">0.2%</span>
<span class="t" style="left:36.5px;top:564.5px;font-size:32px;line-height:32px;color:#242424;font-weight:bold;width:504.8px;text-align-last:justify;transform:scaleX(0.985);-webkit-text-stroke:.7px #242424;">世界のスマートフォンOSシェア率</span>
<div style="left:35px;top:635.5px;width:576px;height:35px;background:#f5f5f5;border-radius:7px 7px 0 0;"></div>
<span class="t" style="left:46px;top:642.0px;font-size:23px;line-height:23px;color:#242424;font-weight:bold;width:23.6px;text-align-last:justify;">年</span>
<span class="t" style="left:162.5px;top:642.0px;font-size:23px;line-height:23px;color:#242424;width:38.9px;text-align-last:justify;transform:scaleX(0.952);-webkit-text-stroke:.5px #242424;">iOS</span>
<span class="t" style="left:297px;top:642.0px;font-size:23px;line-height:23px;color:#242424;width:79.9px;text-align-last:justify;transform:scaleX(1.097);-webkit-text-stroke:.5px #242424;">Android</span>
<span class="t" style="left:472px;top:642.0px;font-size:23px;line-height:23px;color:#242424;font-weight:bold;width:71.6px;text-align-last:justify;transform:scaleX(0.993);">その他</span>
<span class="t" style="left:46px;top:679.2px;font-size:22.5px;line-height:22.5px;color:#242424;width:50.7px;text-align-last:justify;">2021</span>
<span class="t" style="left:162.5px;top:679.2px;font-size:22.5px;line-height:22.5px;color:#242424;width:64.4px;text-align-last:justify;transform:scaleX(0.979);">27.8%</span>
<span class="t" style="left:297px;top:679.2px;font-size:22.5px;line-height:22.5px;color:#242424;width:64.4px;text-align-last:justify;transform:scaleX(0.987);">71.6%</span>
<span class="t" style="left:472px;top:679.2px;font-size:22.5px;line-height:22.5px;color:#242424;width:51.9px;text-align-last:justify;transform:scaleX(0.965);">0.6%</span>
<div style="left:35px;top:707.5px;width:576px;height:1.5px;background:#d1d1d1;"></div>
</div>
<div style="left:2842px;top:557px;width:22px;height:712px;background:#f3f2f1;border-radius:11px;"></div>
<div style="left:2846px;top:910.5px;width:14px;height:164px;background:#616161;border-radius:7px;"></div>
<div style="left:2475px;top:1279px;width:348px;height:60px;background:#edebe9;border:2px solid #9bd6b5;border-radius:17px;"></div>
<span class="t" style="left:2493px;top:1298.0px;font-size:24px;line-height:24px;color:#333;width:318.6px;text-align-last:justify;transform:scaleX(0.972);">データの分析情報を表示する</span>
<div style="left:2255px;top:1355px;width:300px;height:60px;background:#edebe9;border:2px solid #9bd6b5;border-radius:17px;"></div>
<span class="t" style="left:2273px;top:1373.5px;font-size:24px;line-height:24px;color:#333;width:268.6px;text-align-last:justify;transform:scaleX(0.976);">数式列の候補を表示する</span>
<div style="left:2571px;top:1355px;width:252px;height:60px;background:#edebe9;border:2px solid #9bd6b5;border-radius:17px;"></div>
<span class="t" style="left:2589px;top:1373.5px;font-size:24px;line-height:24px;color:#333;width:218.6px;text-align-last:justify;transform:scaleX(0.986);">条件付き書式の提案</span>
<div style="left:2759px;top:1431px;width:64px;height:56px;background:#edebe9;border:2px solid #9bd6b5;border-radius:17px;"></div>
<svg style="left:2780px;top:1448px;" width="22" height="22" viewBox="0 0 22 22"><path d="M19.5 11 A8.5 8.5 0 1 1 16.5 4.5 M17 .5 V5.5 H12" fill="none" stroke="#2b2b2b" stroke-width="1.8" stroke-linecap="round" stroke-linejoin="round"/></svg>
<div style="left:2230px;top:1496px;width:601px;height:215px;background:#fff;border:2px solid #c6c6c6;border-radius:15px;"></div>
<span class="t" style="left:2250.5px;top:1528.2px;font-size:27.5px;line-height:27.5px;color:#707070;width:564.0px;text-align-last:justify;transform:scaleX(0.966);">コンテンツを検索する、質問するか、A1:D5</span>
<span class="t" style="left:2250.5px;top:1568.2px;font-size:27.5px;line-height:27.5px;color:#707070;width:487.6px;text-align-last:justify;transform:scaleX(0.960);">に対して行う操作を入力してください</span>
<svg style="left:2408px;top:1648px;" width="34" height="34" viewBox="0 0 34 34"><rect x="5" y="6" width="27" height="25" rx="4" fill="none" stroke="#3b3b3b" stroke-width="2"/><path d="M6 29 L17 19 Q18.5 18 20 19 L31 29" fill="none" stroke="#3b3b3b" stroke-width="2"/><circle cx="25" cy="13" r="2.2" fill="none" stroke="#3b3b3b" stroke-width="1.6"/><circle cx="8" cy="8" r="7.5" fill="#3b3b3b"/><path d="M8 4 V12 M4 8 H12" stroke="#fff" stroke-width="1.8"/></svg>
<svg style="left:2473px;top:1648px;" width="36" height="36" viewBox="0 0 36 36"><path d="M13 1.5 C14 8.5 16.5 11 23.5 12 C16.5 13 14 15.5 13 22.5 C12 15.5 9.5 13 2.5 12 C9.5 11 12 8.5 13 1.5 Z" fill="none" stroke="#3b3b3b" stroke-width="2" stroke-linejoin="round"/><rect x="13" y="12" width="21" height="21" rx="5" fill="#fff" stroke="#3b3b3b" stroke-width="2.2"/><path d="M19 19 H29 M19 25 H26 M30.5 0.5 V7 M27.2 3.8 H33.8 M5 27.5 V34 M1.7 30.8 H8.3" stroke="#3b3b3b" stroke-width="1.9"/></svg>
<span class="t" style="left:2547px;top:1645.0px;font-size:36px;line-height:36px;color:#3b3b3b;width:37.1px;text-align-last:justify;transform:scaleX(0.876);">@</span>
<svg style="left:2618px;top:1648px;" width="34" height="34" viewBox="0 0 34 34"><circle cx="17" cy="17" r="15" fill="none" stroke="#3b3b3b" stroke-width="2.2"/><ellipse cx="17" cy="17" rx="6.5" ry="15" fill="none" stroke="#3b3b3b" stroke-width="2"/><path d="M3 12 H31 M3 22 H31" stroke="#3b3b3b" stroke-width="2"/></svg>
<div style="left:2667.5px;top:1645px;width:1.5px;height:39px;background:#d1d1d1;"></div>
<svg style="left:2696px;top:1647px;" width="26" height="38" viewBox="0 0 26 38"><rect x="7.5" y="1.5" width="11" height="21" rx="5.5" fill="none" stroke="#3b3b3b" stroke-width="2.2"/><path d="M2 17 C2 31 24 31 24 17 M13 28 V35" fill="none" stroke="#3b3b3b" stroke-width="2.2" stroke-linecap="round"/></svg>
<svg style="left:2764px;top:1649px;" width="34" height="32" viewBox="0 0 34 32"><path d="M2 2 L32 16 L2 30 L6.5 16 Z M6.5 16 H19" fill="none" stroke="#bdbdbd" stroke-width="2" stroke-linejoin="round"/></svg>
<div style="left:0px;top:1716px;width:2180px;height:14px;background:#fff;"></div>
<div style="left:0px;top:1716px;width:370px;height:65px;background:#e8e6e6;border-top-right-radius:10px;"></div>
<div style="left:506px;top:1716px;width:1674px;height:65px;background:#e8e6e6;border-top-left-radius:10px;"></div>
<div style="left:370px;top:1728px;width:136px;height:53px;background:#e8e6e6;"></div>
<svg style="left:41px;top:1735px;" width="16" height="24" viewBox="0 0 16 24"><path d="M13 1.5 L2.5 12 L13 22.5" fill="none" stroke="#9a9a9a" stroke-width="2"/></svg>
<svg style="left:105px;top:1735px;" width="16" height="24" viewBox="0 0 16 24"><path d="M2.5 1.5 L13 12 L2.5 22.5" fill="none" stroke="#8a8a8a" stroke-width="2"/></svg>
<span class="t" style="left:237.5px;top:1735.5px;font-size:29px;line-height:29px;color:#2b2b2b;width:92.5px;text-align-last:justify;transform:scaleX(1.006);">Sheet1</span>
<div style="left:370px;top:1716px;width:136px;height:56px;background:#fff;border-radius:0 0 10px 10px;"></div>
<span class="t" style="left:391.5px;top:1729.5px;font-size:29px;line-height:29px;color:#1a1a1a;width:92.5px;text-align-last:justify;transform:scaleX(1.017);">Sheet2</span>
<div style="left:386px;top:1762px;width:104px;height:3.2px;background:#107c41;border-radius:2px;"></div>
<span class="t" style="left:545px;top:1735.5px;font-size:29px;line-height:29px;color:#2b2b2b;width:92.5px;text-align-last:justify;transform:scaleX(1.028);">Sheet3</span>
<div style="left:360px;top:1730px;width:2px;height:35px;background:#cfcfcf;"></div>
<div style="left:514px;top:1730px;width:2px;height:35px;background:#cfcfcf;"></div>
<div style="left:668px;top:1730px;width:2px;height:35px;background:#cfcfcf;"></div>
<svg style="left:753px;top:1735px;" width="24" height="24" viewBox="0 0 24 24"><path d="M12 1 V23 M1 12 H23" stroke="#333" stroke-width="2"/></svg>
<div style="left:1315.5px;top:1736.5px;width:3.5px;height:3.5px;background:#444;"></div>
<div style="left:1315.5px;top:1745.5px;width:3.5px;height:3.5px;background:#444;"></div>
<div style="left:1315.5px;top:1754.5px;width:3.5px;height:3.5px;background:#444;"></div>
<div style="left:2144px;top:1700px;width:34px;height:19px;background:#f6f6f6;border-radius:0 0 17px 17px;"></div>
<svg style="left:2152px;top:1696px;" width="18" height="13" viewBox="0 0 18 13"><path d="M9 12.5 Q10 12.5 11 11 L17 3 Q18 .5 15.5 .5 H2.5 Q0 .5 1 3 L7 11 Q8 12.5 9 12.5 Z" fill="#6e6e6e"/></svg>
<div style="left:1349px;top:1730px;width:795px;height:33.5px;background:#f7f7f7;border-radius:17px;"></div>
<svg style="left:1359px;top:1738px;" width="14" height="18" viewBox="0 0 14 18"><path d="M.5 9 Q.5 8 2 7 L10.5 1 Q13.5 0 13.5 2.5 V15.5 Q13.5 18 10.5 17 L2 11 Q.5 10 .5 9 Z" fill="#6e6e6e"/></svg>
<div style="left:1383px;top:1738px;width:713px;height:17.5px;background:#717171;border-radius:9px;"></div>
<svg style="left:2120px;top:1738px;" width="14" height="18" viewBox="0 0 14 18"><path d="M13.5 9 Q13.5 8 12 7 L3.5 1 Q.5 0 .5 2.5 V15.5 Q.5 18 3.5 17 L12 11 Q13.5 10 13.5 9 Z" fill="#6e6e6e"/></svg>
<div style="left:0px;top:1781px;width:2872px;height:44px;background:#f5f5f5;"></div>
<div style="left:0px;top:1780px;width:2872px;height:2px;background:#c8c6c4;"></div>
<div style="left:0px;top:1823px;width:2872px;height:2px;background:#4a4a4a;"></div>
<span class="t" style="left:23px;top:1791.2px;font-size:23.5px;line-height:23.5px;color:#333;width:96.6px;text-align-last:justify;transform:scaleX(0.979);">準備完了</span>
<svg style="left:140px;top:1780px;" width="50" height="45" viewBox="0 0 50 45"><circle cx="27.8" cy="13.3" r="3.4" fill="none" stroke="#2b2b2b" stroke-width="2"/><path d="M24.3 16.3 L18.5 14.3 C16 13.6 15 17 17.5 18 L23.2 20.4 L23 25 L20 33 C19.5 36.5 23.5 37.2 24.7 34.5 L27.3 27.5 C27.7 26.5 28.3 26.5 28.7 27.5 L30.2 31.8 M31.5 16.3 L37 14.2 C39.5 13.5 40.5 17 38 18 L32.8 20.2 L33.2 21.6" fill="none" stroke="#2b2b2b" stroke-width="2" stroke-linejoin="round" stroke-linecap="round"/><path d="M30.6 23.7 L43.3 36.2 M43.3 23.7 L30.6 36.2" stroke="#2b2b2b" stroke-width="1.8"/></svg>
<span class="t" style="left:191px;top:1791.2px;font-size:23.5px;line-height:23.5px;color:#262626;font-weight:bold;width:386.0px;text-align-last:justify;transform:scaleX(0.847);-webkit-text-stroke:.4px #262626;">アクセシビリティ: 検討が必要です</span>
<span class="t" style="left:1426.5px;top:1791.0px;font-size:24px;line-height:24px;color:#333;width:202.1px;text-align-last:justify;transform:scaleX(1.107);">平均: 505.8754375</span>
<span class="t" style="left:1679px;top:1791.0px;font-size:24px;line-height:24px;color:#333;width:187.6px;text-align-last:justify;transform:scaleX(0.925);">データの個数: 20</span>
<span class="t" style="left:1883.5px;top:1791.0px;font-size:24px;line-height:24px;color:#333;width:162.0px;text-align-last:justify;transform:scaleX(1.103);">合計: 8094.007</span>
<svg style="left:2099px;top:1789px;" width="30" height="30" viewBox="0 0 30 30"><path d="M13 18 H2 V2 H27 V10" fill="none" stroke="#2b2b2b" stroke-width="2"/><circle cx="20" cy="20" r="5" fill="none" stroke="#2b2b2b" stroke-width="3.5" stroke-dasharray="2.6 1.3"/><circle cx="20" cy="20" r="3.5" fill="none" stroke="#2b2b2b" stroke-width="1.8"/></svg>
<span class="t" style="left:2133px;top:1791.0px;font-size:24px;line-height:24px;color:#333;width:96.6px;text-align-last:justify;">表示設定</span>
<div style="left:2266px;top:1782px;width:79.5px;height:41px;background:#dcdcdc;"></div>
<svg style="left:2291px;top:1789px;" width="27" height="27" viewBox="0 0 27 27"><rect x="1" y="1" width="24.5" height="24.5" fill="none" stroke="#2b2b2b" stroke-width="2"/><path d="M1 9.2 H25.5 M1 17.3 H25.5 M9.2 1 V25.5 M17.3 1 V25.5" stroke="#2b2b2b" stroke-width="2"/></svg>
<svg style="left:2371px;top:1789px;" width="30" height="27" viewBox="0 0 30 27"><rect x="1" y="1" width="27" height="24.5" fill="none" stroke="#2b2b2b" stroke-width="2"/><rect x="7" y="6" width="15" height="14.5" fill="none" stroke="#2b2b2b" stroke-width="1.8"/><path d="M10 10.5 H19 M10 13.5 H19 M10 16.5 H19" stroke="#2b2b2b" stroke-width="1.5"/></svg>
<svg style="left:2451px;top:1789px;" width="30" height="27" viewBox="0 0 30 27"><rect x="1" y="1" width="27" height="24.5" fill="none" stroke="#2b2b2b" stroke-width="2"/><path d="M1.5 13 H19 V1 M10 1 V13" fill="none" stroke="#2b2b2b" stroke-width="2"/></svg>
<div style="left:2518px;top:1802px;width:15px;height:1.6px;background:#555;"></div>
<div style="left:2545px;top:1802px;width:198px;height:1.6px;background:#666;"></div>
<div style="left:2639px;top:1792px;width:10px;height:22px;background:#5f5f5f;"></div>
<div style="left:2753px;top:1802px;width:16px;height:1.6px;background:#555;"></div>
<div style="left:2760.2px;top:1795px;width:1.6px;height:16px;background:#555;"></div>
<span class="t" style="left:2796.5px;top:1790.0px;font-size:26px;line-height:26px;color:#333;width:67.1px;text-align-last:justify;">100%</span>
<svg style="left:2659.5px;top:175px;" width="59" height="54.0" viewBox="0 0 59 54"><path d="M36 0 C33.5 .5 32 2.5 31 6 L28 17.5 C29 15.6 30 15.2 32 15.2 L49 15.2 C45.5 14 44.5 11 43 6 C42 2.5 40.5 0 37 0 Z" fill="url(#cpB)"/>
<path d="M13.5 0 C9 .5 7 5 5.5 10 L.8 28 C-.6 34 1 38.7 7 38.7 L17 38.7 C21 38.7 22.5 36 23.7 32 L31 6 C32 2.5 33.5 .5 36.5 0 Z" fill="url(#cpA)"/>
<path d="M10 38.7 C13.5 39.5 14.5 42 16 47 C17 51 18.5 53.9 22 53.9 L24.5 53.9 C27 53 28 50 29 47 L31.5 37.5 C30.5 38.7 29 38.7 27 38.7 Z" fill="url(#cpD)"/>
<path d="M39.5 15.2 H52 C57.5 15.2 59.5 19 58.3 25 L53.5 43 C52 49 50 53.9 45 53.9 L23 53.9 C27 53.5 28 50 29 47 L35 23 C36 19 37 15.7 39.5 15.2 Z" fill="url(#cpC)"/></svg>
</body></html>
